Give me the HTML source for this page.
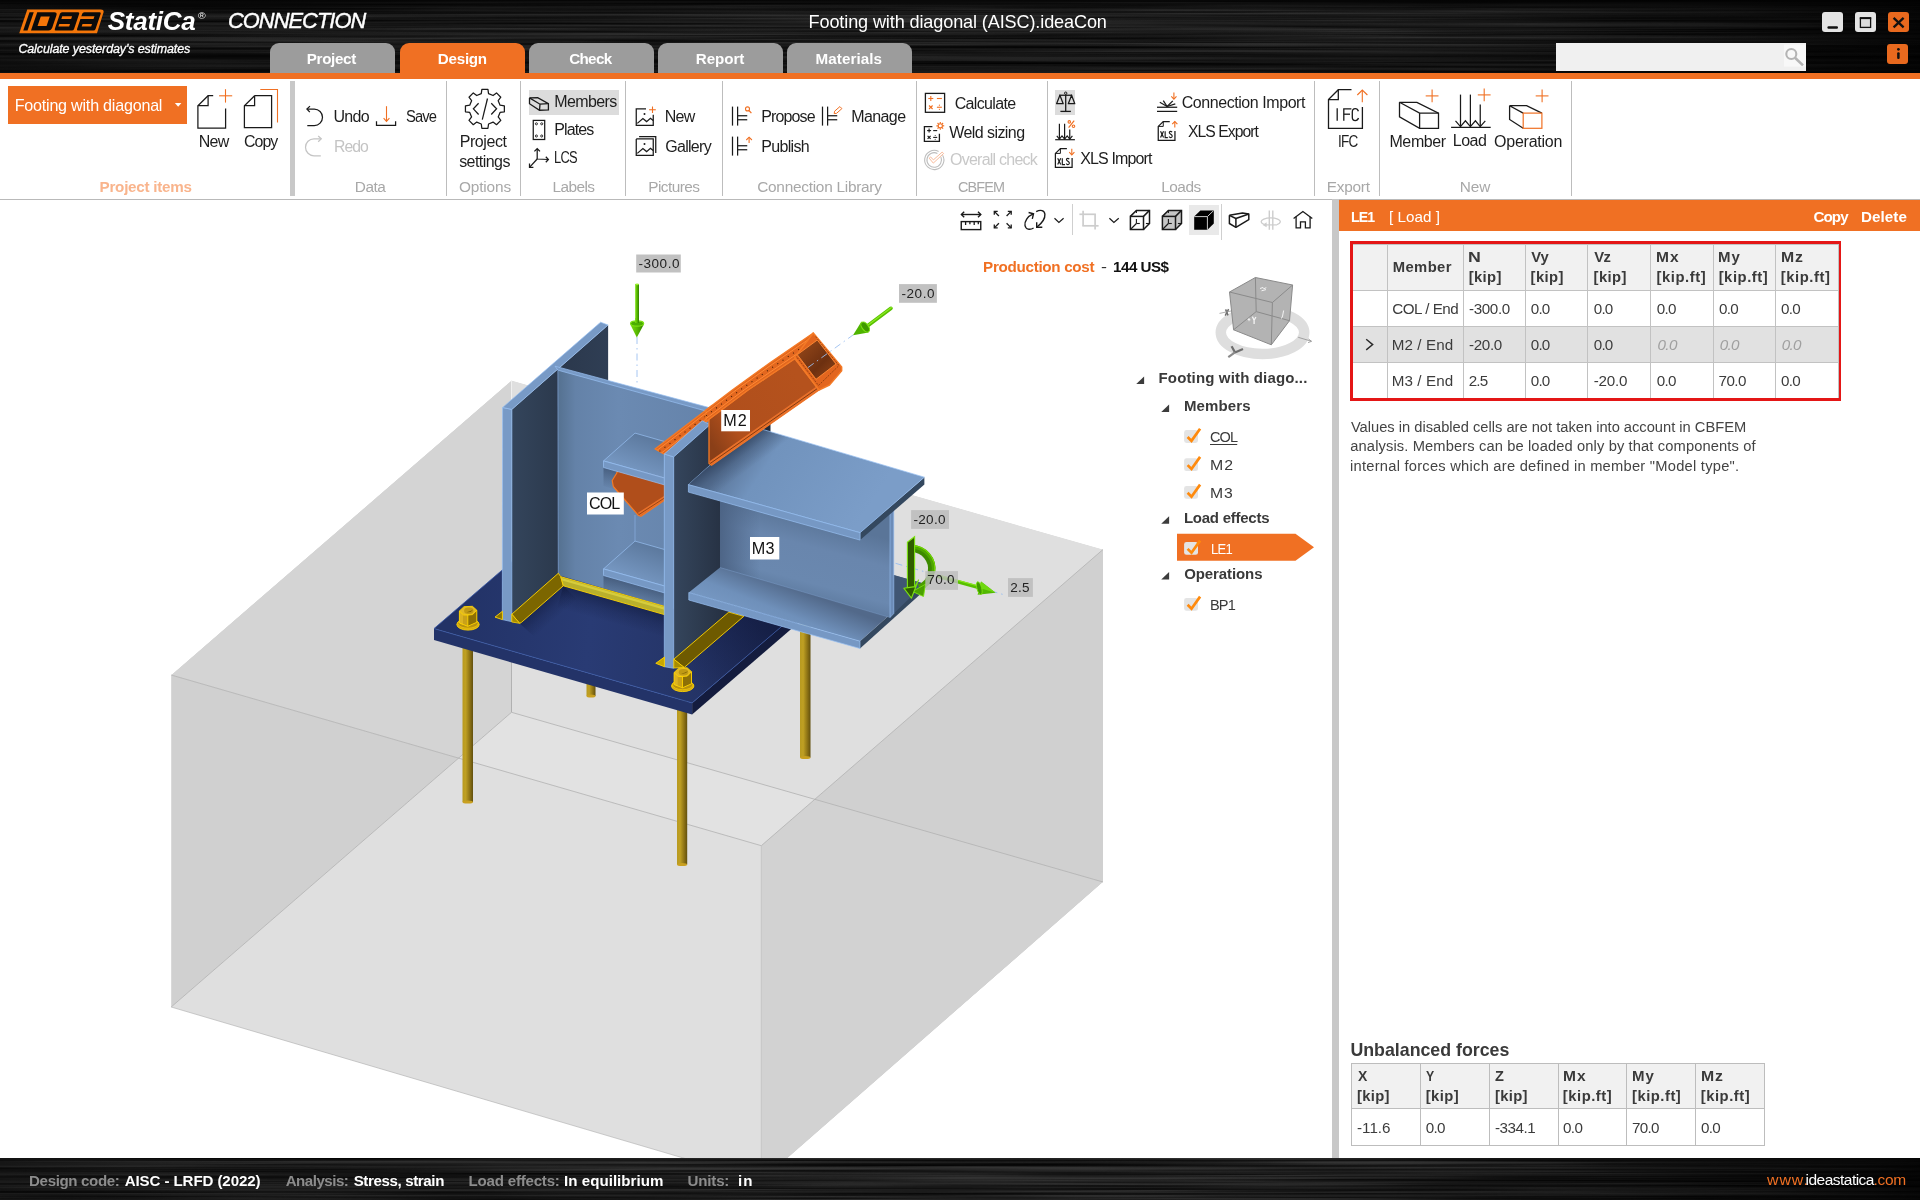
<!DOCTYPE html>
<html><head><meta charset="utf-8"><title>IDEA StatiCa Connection</title>
<style>
html,body{margin:0;padding:0;}
body{width:1920px;height:1200px;overflow:hidden;background:#fff;font-family:"Liberation Sans",sans-serif;position:relative;}
.t{position:absolute;white-space:pre;font-family:"Liberation Sans",sans-serif;}
.abs{position:absolute;}
svg{position:absolute;left:0;top:0;overflow:visible;}
</style></head><body>
<!-- header brushed texture -->
<svg width="1920" height="1200" viewBox="0 0 1920 1200">
<defs>
<filter id="brush" x="0" y="0" width="100%" height="100%" color-interpolation-filters="sRGB">
<feTurbulence type="fractalNoise" baseFrequency="0.0015 0.34" numOctaves="3" seed="7" result="n"/>
<feColorMatrix type="matrix" values="0 0 0 0 0  0 0 0 0 0  0 0 0 0 0  1.8 0 0 0 -0.65"/>
<feComposite operator="in" in2="SourceGraphic"/>
</filter>
<filter id="brush2" x="0" y="0" width="100%" height="100%" color-interpolation-filters="sRGB">
<feTurbulence type="fractalNoise" baseFrequency="0.0025 0.3" numOctaves="3" seed="23" result="n"/>
<feColorMatrix type="matrix" values="0 0 0 0 0  0 0 0 0 0  0 0 0 0 0  1.4 0 0 0 -0.5"/>
<feComposite operator="in" in2="SourceGraphic"/>
</filter>
<linearGradient id="hdrg" x1="0" x2="1" y1="0" y2="0">
<stop offset="0" stop-color="#242424"/><stop offset="0.3" stop-color="#313131"/><stop offset="0.72" stop-color="#333333"/><stop offset="0.88" stop-color="#1e1e1e"/><stop offset="1" stop-color="#0a0a0a"/>
</linearGradient>
<linearGradient id="hdrv" x1="0" x2="0" y1="0" y2="1"><stop offset="0" stop-color="#000" stop-opacity="0.8"/><stop offset="0.12" stop-color="#000" stop-opacity="0.15"/><stop offset="0.3" stop-color="#000" stop-opacity="0"/><stop offset="0.55" stop-color="#000" stop-opacity="0.05"/><stop offset="0.75" stop-color="#000" stop-opacity="0.3"/><stop offset="1" stop-color="#000" stop-opacity="0.4"/></linearGradient>
</defs>
<rect x="0" y="0" width="1920" height="74" fill="url(#hdrg)"/>
<rect x="0" y="0" width="1920" height="74" fill="#000" filter="url(#brush2)"/>
<rect x="0" y="0" width="1920" height="74" fill="#9a9a9a" filter="url(#brush)"/>
<rect x="0" y="0" width="1920" height="74" fill="url(#hdrv)"/>
<rect x="0" y="1158" width="1920" height="42" fill="url(#hdrg)"/>
<rect x="0" y="1158" width="1920" height="42" fill="#000" filter="url(#brush2)"/>
<rect x="0" y="1158" width="1920" height="42" fill="#9a9a9a" filter="url(#brush)"/>
</svg>
<!-- orange strip -->
<div class="abs" style="left:0;top:72.6px;width:1920px;height:6.8px;background:#f07023"></div>
<!-- tabs -->
<div class="abs" style="left:270px;top:43.2px;width:125px;height:29.6px;background:#9c9c9c;border-radius:9px 9px 0 0"></div>
<div class="abs" style="left:400px;top:43.2px;width:125px;height:30px;background:#f07023;border-radius:9px 9px 0 0"></div>
<div class="abs" style="left:529px;top:43.2px;width:125px;height:29.6px;background:#9c9c9c;border-radius:9px 9px 0 0"></div>
<div class="abs" style="left:658px;top:43.2px;width:125px;height:29.6px;background:#9c9c9c;border-radius:9px 9px 0 0"></div>
<div class="abs" style="left:787px;top:43.2px;width:125px;height:29.6px;background:#9c9c9c;border-radius:9px 9px 0 0"></div>
<!-- window buttons -->
<div class="abs" style="left:1822px;top:12px;width:21px;height:20px;background:#e4e4e4;border-radius:3px"></div>
<div class="abs" style="left:1855px;top:12px;width:21px;height:20px;background:#e4e4e4;border-radius:3px"></div>
<div class="abs" style="left:1888px;top:12px;width:21px;height:20px;background:#e8691e;border-radius:3px"></div>
<div class="abs" style="left:1887px;top:43.5px;width:21px;height:20px;background:#e8691e;border-radius:3px"></div>
<!-- search -->
<div class="abs" style="left:1556px;top:43px;width:250px;height:27.5px;background:#f0f0f0"></div>
<!-- ribbon -->
<div class="abs" style="left:0;top:79.4px;width:1920px;height:118px;background:#fff"></div>
<div class="abs" style="left:0;top:198.8px;width:1920px;height:1.3px;background:#b9b9b9"></div>
<div class="abs" style="left:8px;top:86px;width:179px;height:38px;background:#f07023"></div>
<div class="abs" style="left:289.5px;top:81px;width:5.5px;height:115px;background:#c8c8c8"></div>
<div class="abs" style="left:446px;top:81px;width:1px;height:115px;background:#bdbdbd"></div>
<div class="abs" style="left:520px;top:81px;width:1px;height:115px;background:#bdbdbd"></div>
<div class="abs" style="left:625px;top:81px;width:1px;height:115px;background:#bdbdbd"></div>
<div class="abs" style="left:721.5px;top:81px;width:1px;height:115px;background:#bdbdbd"></div>
<div class="abs" style="left:915.5px;top:81px;width:1px;height:115px;background:#bdbdbd"></div>
<div class="abs" style="left:1046.5px;top:81px;width:1px;height:115px;background:#bdbdbd"></div>
<div class="abs" style="left:1314px;top:81px;width:1px;height:115px;background:#bdbdbd"></div>
<div class="abs" style="left:1379px;top:81px;width:1px;height:115px;background:#bdbdbd"></div>
<div class="abs" style="left:1570.5px;top:81px;width:1px;height:115px;background:#bdbdbd"></div>
<div class="abs" style="left:529px;top:89.5px;width:90px;height:25.5px;background:#dcdcdc"></div>
<div class="abs" style="left:1055px;top:89.5px;width:20px;height:25.5px;background:#dcdcdc"></div>
<!-- splitter -->
<div class="abs" style="left:1332.4px;top:199.4px;width:6.5px;height:959px;background:#c8c8c8"></div>
<!-- toolbar selected -->
<div class="abs" style="left:1189px;top:205px;width:30px;height:30px;background:#e9e9e9"></div>
<div class="abs" style="left:1072px;top:204px;width:1px;height:31px;background:#cfcfcf"></div>
<div class="abs" style="left:1221px;top:204px;width:1px;height:36px;background:#cfcfcf"></div>
<!-- right panel header -->
<div class="abs" style="left:1339px;top:200px;width:581px;height:31px;background:#f07023"></div>
<!-- red table -->
<div class="abs" style="left:1349.9px;top:241.3px;width:491.3px;height:159.4px;background:#e41616"></div>
<div class="abs" style="left:1352.5px;top:244px;width:486px;height:154px;background:#c2c2c2"></div>
<!-- cells drawn by svg below -->
<svg width="1920" height="1200" viewBox="0 0 1920 1200" shape-rendering="crispEdges">
<g id="tbl1">
<!-- header -->
<rect x="1353" y="244.5" width="34" height="45" fill="#f1f1f1"/>
<rect x="1388" y="244.5" width="75" height="45" fill="#f1f1f1"/>
<rect x="1464" y="244.5" width="61" height="45" fill="#f1f1f1"/>
<rect x="1526" y="244.5" width="61" height="45" fill="#f1f1f1"/>
<rect x="1588" y="244.5" width="62" height="45" fill="#f1f1f1"/>
<rect x="1651" y="244.5" width="62" height="45" fill="#f1f1f1"/>
<rect x="1714" y="244.5" width="61" height="45" fill="#f1f1f1"/>
<rect x="1776" y="244.5" width="62" height="45" fill="#f1f1f1"/>
<!-- row1 -->
<rect x="1353" y="290.5" width="34" height="35" fill="#fff"/>
<rect x="1388" y="290.5" width="75" height="35" fill="#fff"/>
<rect x="1464" y="290.5" width="61" height="35" fill="#fff"/>
<rect x="1526" y="290.5" width="61" height="35" fill="#fff"/>
<rect x="1588" y="290.5" width="62" height="35" fill="#fff"/>
<rect x="1651" y="290.5" width="62" height="35" fill="#fff"/>
<rect x="1714" y="290.5" width="61" height="35" fill="#fff"/>
<rect x="1776" y="290.5" width="62" height="35" fill="#fff"/>
<!-- row2 -->
<rect x="1353" y="326.5" width="34" height="35" fill="#e1e1e1"/>
<rect x="1388" y="326.5" width="75" height="35" fill="#e1e1e1"/>
<rect x="1464" y="326.5" width="61" height="35" fill="#e1e1e1"/>
<rect x="1526" y="326.5" width="61" height="35" fill="#e1e1e1"/>
<rect x="1588" y="326.5" width="62" height="35" fill="#e1e1e1"/>
<rect x="1651" y="326.5" width="62" height="35" fill="#e1e1e1"/>
<rect x="1714" y="326.5" width="61" height="35" fill="#e1e1e1"/>
<rect x="1776" y="326.5" width="62" height="35" fill="#e1e1e1"/>
<!-- row3 -->
<rect x="1353" y="362.5" width="34" height="35" fill="#fff"/>
<rect x="1388" y="362.5" width="75" height="35" fill="#fff"/>
<rect x="1464" y="362.5" width="61" height="35" fill="#fff"/>
<rect x="1526" y="362.5" width="61" height="35" fill="#fff"/>
<rect x="1588" y="362.5" width="62" height="35" fill="#fff"/>
<rect x="1651" y="362.5" width="62" height="35" fill="#fff"/>
<rect x="1714" y="362.5" width="61" height="35" fill="#fff"/>
<rect x="1776" y="362.5" width="62" height="35" fill="#fff"/>
</g>
<g id="tbl2">
<rect x="1351" y="1063" width="414" height="83" fill="#bdbdbd"/>
<rect x="1352" y="1064" width="68" height="44" fill="#f1f1f1"/>
<rect x="1421" y="1064" width="68" height="44" fill="#f1f1f1"/>
<rect x="1490" y="1064" width="68" height="44" fill="#f1f1f1"/>
<rect x="1559" y="1064" width="67" height="44" fill="#f1f1f1"/>
<rect x="1627" y="1064" width="68" height="44" fill="#f1f1f1"/>
<rect x="1696" y="1064" width="68" height="44" fill="#f1f1f1"/>
<rect x="1352" y="1109" width="68" height="36" fill="#fff"/>
<rect x="1421" y="1109" width="68" height="36" fill="#fff"/>
<rect x="1490" y="1109" width="68" height="36" fill="#fff"/>
<rect x="1559" y="1109" width="67" height="36" fill="#fff"/>
<rect x="1627" y="1109" width="68" height="36" fill="#fff"/>
<rect x="1696" y="1109" width="68" height="36" fill="#fff"/>
</g>
</svg>
<!-- tree selection -->
<svg width="1920" height="1200" viewBox="0 0 1920 1200">
<polygon points="1177,533.7 1295.5,533.7 1314,547.2 1295.5,560.7 1177,560.7" fill="#f07023"/>
</svg>

<svg width="1920" height="1200" viewBox="0 0 1920 1200">
<defs>
<clipPath id="vp"><rect x="0" y="199" width="1332" height="959"/></clipPath>
<linearGradient id="gWeb" gradientUnits="userSpaceOnUse" x1="557" y1="0" x2="712" y2="0">
 <stop offset="0" stop-color="#54708f"/><stop offset="0.12" stop-color="#6482a8"/><stop offset="0.4" stop-color="#6b8ab2"/><stop offset="1" stop-color="#6583aa"/></linearGradient>
<linearGradient id="gLF" gradientUnits="userSpaceOnUse" x1="511" y1="0" x2="608" y2="0">
 <stop offset="0" stop-color="#34455c"/><stop offset="0.45" stop-color="#2c3a4e"/><stop offset="0.5" stop-color="#2b384c"/><stop offset="1" stop-color="#2f3e54"/></linearGradient>
<linearGradient id="gRF" gradientUnits="userSpaceOnUse" x1="673" y1="0" x2="760" y2="0">
 <stop offset="0" stop-color="#35465d"/><stop offset="0.55" stop-color="#273244"/><stop offset="1" stop-color="#222c3c"/></linearGradient>
<linearGradient id="gM3web" gradientUnits="userSpaceOnUse" x1="760" y1="505" x2="740" y2="580">
 <stop offset="0" stop-color="#5a7598"/><stop offset="0.35" stop-color="#6986ad"/><stop offset="0.8" stop-color="#6a88af"/><stop offset="1" stop-color="#5f7ca1"/></linearGradient>
<linearGradient id="gM3webL" gradientUnits="userSpaceOnUse" x1="720" y1="0" x2="760" y2="0">
 <stop offset="0" stop-color="#4a6182" stop-opacity="0.9"/><stop offset="1" stop-color="#4a6182" stop-opacity="0"/></linearGradient>
<linearGradient id="gM3top" gradientUnits="userSpaceOnUse" x1="740" y1="440" x2="860" y2="520">
 <stop offset="0" stop-color="#5a7599"/><stop offset="0.25" stop-color="#7193bd"/><stop offset="1" stop-color="#7b9dc8"/></linearGradient>
<linearGradient id="gM3bot" gradientUnits="userSpaceOnUse" x1="800" y1="590" x2="780" y2="640">
 <stop offset="0" stop-color="#52698a"/><stop offset="0.5" stop-color="#6f90ba"/><stop offset="1" stop-color="#7a9cc7"/></linearGradient>
<linearGradient id="gPlate" gradientUnits="userSpaceOnUse" x1="450" y1="620" x2="760" y2="650">
 <stop offset="0" stop-color="#223266"/><stop offset="0.45" stop-color="#293b74"/><stop offset="1" stop-color="#22305f"/></linearGradient>
<linearGradient id="gPlSh" gradientUnits="userSpaceOnUse" x1="700" y1="690" x2="775" y2="615"><stop offset="0" stop-color="#0a1030" stop-opacity="0"/><stop offset="0.5" stop-color="#0a1030" stop-opacity="0.3"/><stop offset="1" stop-color="#0a1030" stop-opacity="0.6"/></linearGradient>
<linearGradient id="gVL" gradientUnits="userSpaceOnUse" x1="0" y1="380" x2="0" y2="712"><stop offset="0" stop-color="#f0f0f0"/><stop offset="0.45" stop-color="#e4e4e4"/><stop offset="0.6" stop-color="#b8b8b8"/><stop offset="1" stop-color="#b0b0b0"/></linearGradient>
<linearGradient id="gShM2" gradientUnits="userSpaceOnUse" x1="738" y1="445" x2="753.6" y2="465.8"><stop offset="0" stop-color="#2c3d58" stop-opacity="0.75"/><stop offset="0.45" stop-color="#2c3d58" stop-opacity="0.3"/><stop offset="1" stop-color="#2c3d58" stop-opacity="0"/></linearGradient>
<linearGradient id="gShSt" gradientUnits="userSpaceOnUse" x1="634" y1="583" x2="629" y2="603"><stop offset="0" stop-color="#2e405c" stop-opacity="0.6"/><stop offset="0.6" stop-color="#2e405c" stop-opacity="0.25"/><stop offset="1" stop-color="#2e405c" stop-opacity="0"/></linearGradient>
<linearGradient id="gShSt1" gradientUnits="userSpaceOnUse" x1="634" y1="475" x2="629" y2="495"><stop offset="0" stop-color="#2e405c" stop-opacity="0.55"/><stop offset="0.6" stop-color="#2e405c" stop-opacity="0.2"/><stop offset="1" stop-color="#2e405c" stop-opacity="0"/></linearGradient>
<linearGradient id="gShW" gradientUnits="userSpaceOnUse" x1="614" y1="600" x2="608" y2="622"><stop offset="0" stop-color="#0c1434" stop-opacity="0.5"/><stop offset="0.5" stop-color="#0c1434" stop-opacity="0.2"/><stop offset="1" stop-color="#0c1434" stop-opacity="0"/></linearGradient>
<linearGradient id="gShLF" gradientUnits="userSpaceOnUse" x1="542" y1="604" x2="555" y2="619"><stop offset="0" stop-color="#0c1434" stop-opacity="0.45"/><stop offset="0.5" stop-color="#0c1434" stop-opacity="0.18"/><stop offset="1" stop-color="#0c1434" stop-opacity="0"/></linearGradient>
<linearGradient id="gRod" x1="0" x2="1" y1="0" y2="0">
 <stop offset="0" stop-color="#b89a20"/><stop offset="0.3" stop-color="#bfa023"/><stop offset="0.72" stop-color="#8a7014"/><stop offset="1" stop-color="#62500e"/></linearGradient>
<linearGradient id="gM2f" gradientUnits="userSpaceOnUse" x1="709" y1="440" x2="800" y2="380">
 <stop offset="0" stop-color="#8a3f18"/><stop offset="0.25" stop-color="#b04f1c"/><stop offset="1" stop-color="#b5521d"/></linearGradient>
<linearGradient id="gM2in" gradientUnits="userSpaceOnUse" x1="800" y1="350" x2="835" y2="385">
 <stop offset="0" stop-color="#8e4318"/><stop offset="0.5" stop-color="#6d3010"/><stop offset="1" stop-color="#9a4a1a"/></linearGradient>
<linearGradient id="gStf" gradientUnits="userSpaceOnUse" x1="640" y1="435" x2="625" y2="475">
 <stop offset="0" stop-color="#5d7a9f"/><stop offset="1" stop-color="#7a9cc7"/></linearGradient>
<linearGradient id="gStf2" gradientUnits="userSpaceOnUse" x1="640" y1="543" x2="625" y2="583">
 <stop offset="0" stop-color="#5d7a9f"/><stop offset="1" stop-color="#7a9cc7"/></linearGradient>
<linearGradient id="gArr" x1="0" x2="1" y1="0" y2="0">
 <stop offset="0" stop-color="#7be010"/><stop offset="0.5" stop-color="#58b800"/><stop offset="1" stop-color="#2f7d00"/></linearGradient>
</defs>
<g clip-path="url(#vp)">
<clipPath id="cT"><polygon points="171.2,675.0 511.5,380.5 1103.0,549.5 761.3,845.7"/></clipPath>
<clipPath id="cFL"><polygon points="171.2,675.0 761.3,845.7 761.3,1181.0 171.2,1007.0"/></clipPath>
<clipPath id="cFR"><polygon points="761.3,845.7 1103.0,549.5 1103.0,882.0 761.3,1181.0"/></clipPath>
<g clip-path="url(#cT)"><polygon points="171.2,675.0 511.5,380.5 1103.0,549.5 761.3,845.7" fill="rgb(222,222,222)"/><polygon points="171.2,675.0 511.5,380.5 511.5,712.3 171.2,1007.0" fill="rgb(212,212,212)"/><polygon points="511.5,380.5 1103.0,549.5 1103.0,882.0 511.5,712.3" fill="rgb(223,223,223)"/><polygon points="171.2,1007.0 511.5,712.3 1103.0,882.0 761.3,1181.0" fill="rgb(226,226,226)"/></g>
<g clip-path="url(#cFL)"><polygon points="171.2,675.0 761.3,845.7 761.3,1181.0 171.2,1007.0" fill="rgb(222,222,222)"/><polygon points="171.2,675.0 511.5,380.5 511.5,712.3 171.2,1007.0" fill="rgb(208,208,208)"/><polygon points="171.2,1007.0 511.5,712.3 1103.0,882.0 761.3,1181.0" fill="rgb(223,223,223)"/></g>
<g clip-path="url(#cFR)"><polygon points="761.3,845.7 1103.0,549.5 1103.0,882.0 761.3,1181.0" fill="rgb(210,210,210)"/><polygon points="171.2,1007.0 511.5,712.3 1103.0,882.0 761.3,1181.0" fill="rgb(210,210,210)"/><polygon points="511.5,380.5 1103.0,549.5 1103.0,882.0 511.5,712.3" fill="rgb(208,208,208)"/></g>
<polyline points="511.5,380.5 511.5,712.3" stroke="url(#gVL)" stroke-width="1" fill="none"/>
<polyline points="171.2,1007.0 511.5,712.3 1103.0,882.0" stroke="#b4b4b4" stroke-width="0.85" fill="none"/>
<polyline points="171.2,675.0 761.3,845.7 1103.0,549.5" stroke="#b4b4b4" stroke-width="0.85" fill="none"/>
<polyline points="761.3,845.7 761.3,1181.0" stroke="#c6c6c6" stroke-width="1" fill="none"/>
<polyline points="171.2,1007.0 761.3,1181.0" stroke="#bcbcbc" stroke-width="0.8" fill="none"/>
<rect x="586.5" y="680" width="9.0" height="16" fill="url(#gRod)"/>
<ellipse cx="591.0" cy="696" rx="4.5" ry="1.6" fill="#c9a020"/>
<rect x="800" y="600" width="10.5" height="157.5" fill="url(#gRod)"/>
<ellipse cx="805.25" cy="757.5" rx="5.25" ry="1.6" fill="#c9a020"/>
<rect x="462.5" y="640" width="10.5" height="162" fill="url(#gRod)"/>
<ellipse cx="467.75" cy="802" rx="5.25" ry="1.6" fill="#c9a020"/>
<rect x="677" y="700" width="10.200000000000045" height="164.5" fill="url(#gRod)"/>
<ellipse cx="682.1" cy="864.5" rx="5.100000000000023" ry="1.6" fill="#c9a020"/>
<polygon points="434.0,628.6 692.1,702.9 692.1,714.6 434.0,640.1" fill="#233368"/>
<polygon points="692.1,702.9 812.1,600.5 812.1,611.0 692.1,714.6" fill="#141c3e"/>
<polygon points="434.0,628.6 692.1,702.9 812.1,600.5 556.0,523.8" fill="url(#gPlate)"/>
<polygon points="684.2,667.5 743.8,616.3 800.0,612.0 693.1,701.9" fill="url(#gPlSh)"/>
<polygon points="563.3,585.8 664.4,614.6 664.4,640.0 557.0,609.0" fill="url(#gShW)"/>
<polygon points="519.6,623.3 563.3,585.8 580.0,602.0 538.0,640.0" fill="url(#gShLF)"/>
<polyline points="556.0,523.8 434.0,628.6 692.1,702.9 812.1,600.5" stroke="#3a5aa8" stroke-width="0.8" fill="none"/>
<ellipse cx="468" cy="624.5" rx="11.2" ry="5.6" fill="#d2a916" stroke="#ffd400" stroke-width="0.9"/>
<ellipse cx="468" cy="623.3" rx="10.2" ry="4.9" fill="#b8920f" stroke="#ffd400" stroke-width="0.6"/>
<polygon points="459.4,611.0 459.4,623.0 467.8,626.3 476.8,622.3 476.8,610.2" fill="#c9a118"/>
<polygon points="467.8,615.0 467.8,626.3 476.8,622.3 476.8,610.2" fill="#8d7006"/>
<polygon points="459.4,611.0 459.4,623.0 463.0,625.1 463.0,613.8" fill="#dcb321"/>
<polyline points="459.4,611.0 459.4,623.0 467.8,626.3 476.8,622.3 476.8,610.2" fill="none" stroke="#ffd400" stroke-width="0.9"/>
<line x1="467.8" y1="615.0" x2="467.8" y2="626.3" stroke="#ffd400" stroke-width="0.9"/>
<polygon points="459.4,611.0 464.0,606.7 472.4,606.3 476.8,610.2 472.6,614.6 467.8,615.0 463.6,615.0" fill="#e0b824" stroke="#ffd400" stroke-width="0.9" stroke-linejoin="round"/>
<ellipse cx="468.8" cy="610.7" rx="4.7" ry="3.2" fill="#c09a14"/>
<path d="M466.5,612.2 Q471,613.0 473.3,609.4 Q471,611.2 466.5,612.2Z" fill="#7a5f04"/>
<polygon points="511.9,409.4 608.1,325.0 608.1,525.4 511.8,621.0" fill="url(#gLF)"/>
<polygon points="502.6,407.5 511.9,409.4 511.8,621.7 502.3,619.6" fill="#789ac6" stroke="#98c0f2" stroke-width="0.7"/>
<polygon points="502.6,407.5 600.6,322.2 608.1,325.0 511.9,409.4" fill="#789ac6" stroke="#98c0f2" stroke-width="0.7"/>
<polygon points="557.9,369.5 712.0,411.5 712.0,620.0 558.3,575.0" fill="url(#gWeb)"/>
<polygon points="555.0,366.2 710.0,407.8 708.0,411.6 558.0,370.2" fill="#789ac6" stroke="#98c0f2" stroke-width="0.7"/>
<line x1="557.9" y1="370" x2="558.3" y2="574" stroke="#7a9ccc" stroke-width="0.8"/>
<line x1="635" y1="515" x2="635" y2="541" stroke="#86aadb" stroke-width="0.8"/>
<polygon points="603.5,574.0 664.8,592.5 664.8,612.0 603.5,594.0" fill="url(#gShSt)"/>
<polygon points="603.5,466.0 664.8,484.5 664.8,504.0 603.5,486.0" fill="url(#gShSt1)"/>
<polygon points="558.3,573.3 511.8,614.2 519.6,623.3 521.3,622.5 563.3,585.8 560.8,576.7" fill="#7c6600" stroke="#ffd400" stroke-width="0.9" stroke-linejoin="round"/>
<polygon points="511.8,614.2 511.8,622.0 519.6,623.3" fill="#a88c00" stroke="#ffd400" stroke-width="0.8" stroke-linejoin="round"/>
<polygon points="495.0,617.1 502.4,611.3 502.4,619.6" fill="#8a7200" stroke="#ffd400" stroke-width="0.9" stroke-linejoin="round"/>
<polygon points="560.8,576.7 664.4,606.3 664.4,614.6 563.3,585.8" fill="#b9b02c" stroke="#ffd400" stroke-width="0.9" stroke-linejoin="round"/>
<polygon points="561.5,578.0 664.4,607.2 664.4,609.8 562.2,580.5" fill="#d6cc3c"/>
<polygon points="618.0,470.0 664.8,470.0 664.8,500.0 641.0,516.3 638.3,515.4 613.3,486.5 612.2,480.5 616.5,473.5" fill="#b04e1b" stroke="#f47a26" stroke-width="1.2" stroke-linejoin="round"/>
<polygon points="640.0,516.2 664.8,500.0 664.8,495.5 638.0,512.8" fill="#e8702a"/>
<polyline points="639.0,514.5 664.8,497.8" stroke="#7a3208" stroke-width="0.7" fill="none"/>
<polygon points="635.0,433.1 603.5,460.9 664.8,478.1 664.8,441.6" fill="url(#gStf)" stroke="#98c0f2" stroke-width="0.7"/>
<polygon points="603.5,460.9 664.8,478.1 664.8,485.0 603.5,467.5" fill="#7698c4" stroke="#98c0f2" stroke-width="0.7"/>
<polygon points="635.0,541.1 603.5,568.9 664.8,586.1 664.8,549.6" fill="url(#gStf2)" stroke="#98c0f2" stroke-width="0.7"/>
<polygon points="603.5,568.9 664.8,586.1 664.8,593.0 603.5,575.5" fill="#7698c4" stroke="#98c0f2" stroke-width="0.7"/>
<polygon points="655.0,448.9 712.0,405.5 712.0,417.5 664.0,454.0" fill="#e2671f" stroke="#f47a26" stroke-width="1.3" stroke-linejoin="round"/>
<polyline points="657.2,450.2 712.0,408.5" stroke="#ff8a34" stroke-width="1" fill="none"/>
<polyline points="661.8,452.7 712.0,414.5" stroke="#ff8a34" stroke-width="1" fill="none"/>
<polyline points="659.5,451.4 712.0,411.5" stroke="#4a2006" stroke-width="1.1" stroke-dasharray="1.1 5.2" fill="none"/>
<polygon points="673.7,456.9 770.5,372.0 770.5,583.0 673.7,668.0" fill="url(#gRF)"/>
<polygon points="664.3,454.0 673.7,456.9 673.7,668.3 664.3,666.7" fill="#789ac6" stroke="#98c0f2" stroke-width="0.7"/>
<polygon points="664.3,454.0 702.2,420.8 710.0,424.6 673.7,456.9" fill="#789ac6" stroke="#98c0f2" stroke-width="0.7"/>
<polygon points="728.8,612.1 673.8,659.2 684.2,667.5 743.8,616.3" fill="#6e5a00" stroke="#ffd400" stroke-width="0.9" stroke-linejoin="round"/>
<polygon points="673.8,659.2 673.8,668.0 684.2,667.5" fill="#a88c00" stroke="#ffd400" stroke-width="0.8" stroke-linejoin="round"/>
<polygon points="655.8,663.3 664.4,657.1 664.4,666.7" fill="#c9a800" stroke="#ffd400" stroke-width="0.9" stroke-linejoin="round"/>
<polygon points="860.0,641.2 924.5,583.8 924.5,590.5 860.0,648.5" fill="#34485f"/>
<polygon points="720.0,567.5 753.0,536.0 924.5,583.8 860.0,641.2 688.8,592.5" fill="url(#gM3bot)"/>
<polygon points="893.8,575.0 924.5,583.8 893.8,613.5" fill="#405674"/>
<polygon points="688.8,592.5 860.0,641.2 860.0,648.5 688.8,600.0" fill="#7698c4" stroke="#98c0f2" stroke-width="0.7"/>
<polygon points="720.0,462.0 890.5,513.0 890.5,617.5 720.0,567.5" fill="url(#gM3web)"/>
<polygon points="720.0,490.0 760.0,502.0 760.0,579.5 720.0,567.5" fill="url(#gM3webL)"/>
<polygon points="890.0,500.0 893.8,501.0 893.8,613.5 890.0,617.5" fill="#6c8cb8" stroke="#98c0f2" stroke-width="0.6"/>
<line x1="720" y1="567.5" x2="890" y2="617.5" stroke="#86aadb" stroke-width="0.6" stroke-opacity="0.6"/>
<polygon points="860.1,532.7 924.4,477.2 924.4,484.6 860.1,540.1" fill="#34485f"/>
<polygon points="688.4,484.6 753.0,426.5 924.4,477.2 860.1,532.7" fill="url(#gM3top)" stroke="#98c0f2" stroke-width="0.7"/>
<polygon points="688.4,484.6 753.0,427.0 790.0,438.0 735.0,500.0" fill="url(#gShM2)"/>
<polygon points="688.4,484.6 860.1,532.7 860.1,540.1 688.4,492.1" fill="#7698c4" stroke="#98c0f2" stroke-width="0.7"/>
<polygon points="709.0,419.3 748.0,390.0 770.0,375.3 794.7,358.7 819.0,390.0 764.5,428.0 711.5,465.2 709.0,463.5" fill="url(#gM2f)" stroke="#f47a26" stroke-width="1.3" stroke-linejoin="round"/>
<polygon points="711.5,465.4 764.5,428.2 819.0,390.2 816.8,386.2 762.4,424.2 709.6,461.2" fill="#e8702a"/>
<polyline points="710.5,463.3 763.4,426.2 817.9,388.2" stroke="#6a2c08" stroke-width="0.8" fill="none"/>
<polygon points="706.0,410.0 732.3,390.0 770.0,362.7 813.3,333.0 794.7,358.7 770.0,375.3 748.0,390.0 706.0,421.5" fill="#e2671f" stroke="#f47a26" stroke-width="1.3" stroke-linejoin="round"/>
<polyline points="706.0,412.9 736.2,390.0 770.0,365.8 808.6,339.4" stroke="#ff8a34" stroke-width="1" fill="none"/>
<polyline points="706.0,418.6 744.1,390.0 770.0,372.2 799.4,352.3" stroke="#ff8a34" stroke-width="1" fill="none"/>
<polyline points="706.0,415.8 740.1,390.0 770.0,369.0 804.0,345.9" stroke="#4a2006" stroke-width="1.1" stroke-dasharray="1.1 5.2" fill="none"/>
<polygon points="813.3,333.0 841.7,367.0 841.7,370.7 829.5,385.0 819.0,390.0 794.7,357.5" fill="#e3661f" stroke="#f47a26" stroke-width="1.4" stroke-linejoin="round"/>
<polygon points="817.3,340.0 836.0,364.0 816.0,379.3 797.3,354.7" fill="url(#gM2in)" stroke="#ff8a34" stroke-width="0.9"/>
<polyline points="815.5,336.5 839.0,365.5 818.5,385.5 796.0,356.0" stroke="#7a3208" stroke-width="0.7" stroke-dasharray="2 1.2" fill="none"/>
<line x1="808" y1="367.5" x2="853" y2="335" stroke="#9cc0f0" stroke-width="0.9" stroke-dasharray="7 4 1.5 4"/>
<ellipse cx="682.7" cy="686" rx="11.2" ry="5.6" fill="#d2a916" stroke="#ffd400" stroke-width="0.9"/>
<ellipse cx="682.7" cy="684.8" rx="10.2" ry="4.9" fill="#b8920f" stroke="#ffd400" stroke-width="0.6"/>
<polygon points="674.1,672.5 674.1,684.5 682.5,687.8 691.5,683.8 691.5,671.7" fill="#c9a118"/>
<polygon points="682.5,676.5 682.5,687.8 691.5,683.8 691.5,671.7" fill="#8d7006"/>
<polygon points="674.1,672.5 674.1,684.5 677.7,686.6 677.7,675.3" fill="#dcb321"/>
<polyline points="674.1,672.5 674.1,684.5 682.5,687.8 691.5,683.8 691.5,671.7" fill="none" stroke="#ffd400" stroke-width="0.9"/>
<line x1="682.5" y1="676.5" x2="682.5" y2="687.8" stroke="#ffd400" stroke-width="0.9"/>
<polygon points="674.1,672.5 678.7,668.2 687.1,667.8 691.5,671.7 687.3,676.1 682.5,676.5 678.3,676.5" fill="#e0b824" stroke="#ffd400" stroke-width="0.9" stroke-linejoin="round"/>
<ellipse cx="683.5" cy="672.2" rx="4.7" ry="3.2" fill="#c09a14"/>
<path d="M681.2,673.7 Q685.7,674.5 688.0,670.9 Q685.7,672.7 681.2,673.7Z" fill="#7a5f04"/>
<line x1="637" y1="337" x2="637" y2="386" stroke="#9cc0f0" stroke-width="0.9" stroke-dasharray="7 4 1.5 4"/>
<rect x="635.2" y="284" width="3.8" height="40" fill="url(#gArr)"/>
<ellipse cx="637.1" cy="284.3" rx="1.9" ry="0.9" fill="#9cf030"/>
<polygon points="630.3,324.5 643.8,324.5 636.8,337.5" fill="url(#gArr)"/>
<ellipse cx="637.1" cy="323.5" rx="6.6" ry="2.6" fill="#4cae00" stroke="#7be010" stroke-width="1.1"/>
<rect x="635.2" y="318" width="3.8" height="5" fill="url(#gArr)"/>
<line x1="891" y1="308.3" x2="867" y2="326.3" stroke="#58c000" stroke-width="3.6" stroke-linecap="round"/>
<line x1="891.4" y1="307.6" x2="867.4" y2="325.6" stroke="#8cea20" stroke-width="1.2" stroke-linecap="round"/>
<polygon points="861.5,321.5 868.5,332.5 853,335.2" fill="#4fb400"/>
<ellipse cx="865.2" cy="327" rx="3.2" ry="5.8" transform="rotate(-37 865.2 327)" fill="#3f9a00" stroke="#7be010" stroke-width="1.1"/>
<line x1="895.5" y1="563.3" x2="1002.8" y2="594.4" stroke="#8ab8f4" stroke-width="0.8" stroke-dasharray="7 4 1.5 4"/>
<path d="M911.5,548.6 A20.2,20.2 0 0 1 931.4,572.5" fill="none" stroke="#3d8a00" stroke-width="7.4"/>
<path d="M911.5,545.8 A23,23 0 0 1 934.4,572.3" fill="none" stroke="#6fd400" stroke-width="1.5"/>
<path d="M911.5,547.6 A21.2,21.2 0 0 1 932.6,572.4" fill="none" stroke="#4fa600" stroke-width="2.2"/>
<path d="M931.4,572.5 A20.2,20.2 0 0 1 919,587.6" fill="none" stroke="#4a9c00" stroke-width="6.5"/>
<polygon points="925.5,584.2 923.5,596.5 912.5,591.5" fill="#4aa000" stroke="#7be010" stroke-width="0.9"/>
<polygon points="907.4,542.2 914.6,536.7 914.6,589.5 907.4,589.5" fill="#2f5c00" stroke="#7be010" stroke-width="1.1"/>
<polygon points="903.8,588.2 908,587.6 915,586.6 918.5,580 911.4,598.2" fill="#2f5c00" stroke="#7be010" stroke-width="1.1" stroke-linejoin="round"/>
<line x1="937" y1="575.9" x2="979" y2="587.4" stroke="#58c000" stroke-width="3.6"/>
<line x1="937.3" y1="574.7" x2="979.3" y2="586.2" stroke="#8cea20" stroke-width="1.1"/>
<polygon points="981,581.6 995.6,592.7 977.6,594.8" fill="#52b800"/>
<polygon points="981,581.6 995.6,592.7 979.5,588" fill="#6fd810"/>
<ellipse cx="979.3" cy="588.2" rx="2.4" ry="6.6" transform="rotate(-15 979.3 588.2)" fill="#3f9a00" stroke="#7be010" stroke-width="0.9"/>
<rect x="636.2" y="254.5" width="44.59999999999991" height="18.0" fill="#c1c1c1"/>
<rect x="899" y="284.1" width="37.89999999999998" height="18.69999999999999" fill="#c1c1c1"/>
<rect x="911.1" y="510.1" width="37.89999999999998" height="18.799999999999955" fill="#c1c1c1"/>
<rect x="925.3" y="571.1" width="32.7" height="18.8" fill="#bdbdbd" fill-opacity="0.82"/>
<rect x="1008" y="578.1" width="24.90000000000009" height="18.799999999999955" fill="#c1c1c1"/>
<rect x="721.2" y="410" width="28.799999999999955" height="21.30000000000001" fill="#fff"/>
<rect x="587" y="492.5" width="36.799999999999955" height="22.0" fill="#fff"/>
<rect x="750" y="537" width="29.299999999999955" height="22.5" fill="#fff"/>
</g>
</svg>
<svg width="1920" height="1200" viewBox="0 0 1920 1200" fill="none" stroke-linecap="butt" stroke-linejoin="miter">
<path d="M27.25,9.6 L100.5,9.6 Q104.4,9.6 103.5,12.6 L97,33.25 L19.25,33.25 Z" fill="#f47609"/>
<g fill="#0b0b0b">
<polygon points="29.49,12.25 33.74,12.25 27.50,30.50 23.25,30.50"/>
<path d="M37.24,12.25 L54.24,12.25 Q57.49,12.25 56.38,15.5 L52.28,27.5 Q51.25,30.5 48.50,30.5 L31.00,30.5 Z"/>
<path d="M62.09,12.25 L78.14,12.25 Q79.74,12.25 79.19,13.85 L74.05,28.9 Q73.50,30.5 71.90,30.5 L55.85,30.5 Q54.25,30.5 54.80,28.9 L59.94,13.85 Q60.49,12.25 62.09,12.25 Z"/>
<path d="M84.34,12.25 L99.64,12.25 Q101.24,12.25 100.69,13.85 L95.55,28.9 Q95.00,30.5 93.40,30.5 L78.10,30.5 Q76.50,30.5 77.05,28.9 L82.19,13.85 Q82.74,12.25 84.34,12.25 Z"/>
</g>
<g fill="#f47609">
<polygon points="40.79,16.50 49.79,16.50 46.54,26.00 37.54,26.00"/>
<polygon points="62.27,16.25 72.07,16.25 71.13,19.00 61.33,19.00"/>
<polygon points="59.22,24.00 70.02,24.00 69.17,26.50 58.37,26.50"/>
<polygon points="80.47,16.25 94.47,16.25 93.53,19.00 79.53,19.00"/>
<polygon points="82.52,24.00 92.02,24.00 91.17,26.50 81.67,26.50"/>
</g>
<rect x="1827.4" y="26.2" width="10.6" height="2.5" rx="1.2" fill="#111"/>
<rect x="1860.4" y="18.2" width="10.2" height="9.2" fill="#dcdcdc" stroke="#111" stroke-width="1.3"/>
<rect x="1859.8" y="17.1" width="11.4" height="2" fill="#111"/>
<line x1="1893.6" y1="17.9" x2="1903.6" y2="27.3" stroke="#111" stroke-width="2.3" />
<line x1="1903.6" y1="17.9" x2="1893.6" y2="27.3" stroke="#111" stroke-width="2.3" />
<circle cx="1898.4" cy="49.3" r="1.35" fill="#111"/>
<rect x="1897.15" y="52.2" width="2.5" height="6.8" rx="1.1" fill="#111"/>
<rect x="1784" y="44.6" width="22" height="22" fill="#f8f8f8"/>
<circle cx="1791.3" cy="54" r="5" stroke="#b4b4b4" stroke-width="2.1"/>
<line x1="1795" y1="57.8" x2="1803" y2="65.4" stroke="#b4b4b4" stroke-width="2.6" />
<polygon points="174.90,103.10 181.40,103.10 178.15,106.80" fill="#fff"/>
<polyline points="213.20,95.70 208.10,95.70 197.90,105.70 197.90,128.10 225.60,128.10 225.60,108.40" fill="none" stroke="#1a1a1a" stroke-width="1.25" />
<polyline points="208.10,95.70 208.10,105.70 197.90,105.70" fill="none" stroke="#1a1a1a" stroke-width="1.25" />
<line x1="219.1" y1="95.8" x2="232.2" y2="95.8" stroke="#f07023" stroke-width="1.1" />
<line x1="225.5" y1="89.2" x2="225.5" y2="102.6" stroke="#f07023" stroke-width="1.1" />
<polyline points="254.60,95.70 271.60,95.70 271.60,127.60 244.40,127.60 244.40,105.70 254.60,95.70" fill="none" stroke="#1a1a1a" stroke-width="1.25" />
<polyline points="254.60,95.70 254.60,105.70 244.40,105.70" fill="none" stroke="#1a1a1a" stroke-width="1.25" />
<polyline points="260.30,89.50 277.50,89.50 277.50,122.60" fill="none" stroke="#f07023" stroke-width="1.1" />
<path d="M307.3,109.1 H314.3 A8.2,8.2 0 0 1 314.3,125.5 H307.3" stroke="#1a1a1a" stroke-width="1.25"/>
<polyline points="310.00,106.10 306.90,109.00 309.80,112.10" fill="none" stroke="#1a1a1a" stroke-width="1.25" />
<path d="M320.9,138.8 H314 A8.5,8.5 0 0 0 314,155.8 H320.8" stroke="#c4c4c4" stroke-width="1.25"/>
<polyline points="318.20,136.00 321.30,138.80 318.20,141.80" fill="none" stroke="#c4c4c4" stroke-width="1.25" />
<line x1="386.5" y1="106.2" x2="386.5" y2="121.2" stroke="#f07023" stroke-width="1.1" />
<polyline points="383.60,118.20 386.50,121.40 389.40,118.20" fill="none" stroke="#f07023" stroke-width="1.1" />
<polyline points="376.50,121.20 376.50,125.30 395.60,125.30 395.60,121.20" fill="none" stroke="#1a1a1a" stroke-width="1.25" />
<polygon points="481.27,93.63 481.86,89.34 487.94,89.34 488.53,93.63 493.06,95.50 496.51,92.89 500.81,97.19 498.20,100.64 500.07,105.17 504.36,105.76 504.36,111.84 500.07,112.43 498.20,116.96 500.81,120.41 496.51,124.71 493.06,122.10 488.53,123.97 487.94,128.26 481.86,128.26 481.27,123.97 476.74,122.10 473.29,124.71 468.99,120.41 471.60,116.96 469.73,112.43 465.44,111.84 465.44,105.76 469.73,105.17 471.60,100.64 468.99,97.19 473.29,92.89 476.74,95.50" stroke="#1a1a1a" stroke-width="1.25" stroke-linejoin="round"/>
<polyline points="478.60,103.20 473.40,108.80 478.60,114.50" fill="none" stroke="#1a1a1a" stroke-width="1.25" />
<line x1="487.5" y1="98.5" x2="482.3" y2="119.6" stroke="#1a1a1a" stroke-width="1.25" />
<polyline points="491.25,103.20 496.60,108.80 491.25,114.50" fill="none" stroke="#1a1a1a" stroke-width="1.25" />
<polyline points="529.50,97.90 537.70,97.60 548.40,103.70 548.40,109.80 539.50,110.25 529.50,103.70 529.50,97.90" fill="none" stroke="#1a1a1a" stroke-width="1.3" />
<polyline points="529.50,97.90 540.00,104.20 548.40,103.70" fill="none" stroke="#1a1a1a" stroke-width="1.3" />
<line x1="540" y1="104.2" x2="539.5" y2="110.25" stroke="#1a1a1a" stroke-width="1.3" />
<rect x="533.25" y="120.4" width="11.45" height="19.1" stroke="#1a1a1a" stroke-width="1.25"/>
<circle cx="536.4" cy="123.8" r="1.05" stroke="#1a1a1a" stroke-width="0.9"/>
<circle cx="541.7" cy="123.8" r="1.05" stroke="#1a1a1a" stroke-width="0.9"/>
<circle cx="536.4" cy="136" r="1.05" stroke="#1a1a1a" stroke-width="0.9"/>
<circle cx="541.7" cy="136" r="1.05" stroke="#1a1a1a" stroke-width="0.9"/>
<polyline points="537.20,148.90 537.20,159.00 548.20,159.50" fill="none" stroke="#1a1a1a" stroke-width="1.25" />
<line x1="537.2" y1="159" x2="529.7" y2="167.1" stroke="#1a1a1a" stroke-width="1.25" />
<polyline points="534.40,151.40 537.20,148.70 540.00,151.40" fill="none" stroke="#1a1a1a" stroke-width="1.25" />
<polyline points="545.80,156.70 548.40,159.50 545.80,162.30" fill="none" stroke="#1a1a1a" stroke-width="1.25" />
<polyline points="529.50,163.60 529.50,167.25 533.40,167.25" fill="none" stroke="#1a1a1a" stroke-width="1.25" />
<polyline points="646.00,108.90 636.25,108.90 636.25,125.40 653.25,125.40 653.25,114.75" fill="none" stroke="#1a1a1a" stroke-width="1.25" />
<polyline points="637.30,123.40 642.90,118.50 646.60,121.60 650.40,118.25 653.25,120.60" fill="none" stroke="#1a1a1a" stroke-width="1.25" />
<circle cx="644.5" cy="114.1" r="1" fill="#1a1a1a"/>
<line x1="649.1" y1="109.75" x2="655.8" y2="109.75" stroke="#f07023" stroke-width="1.1" />
<line x1="652.5" y1="106.5" x2="652.5" y2="113" stroke="#f07023" stroke-width="1.1" />
<polyline points="636.25,138.90 653.25,138.90 653.25,155.40 636.25,155.40 636.25,138.90" fill="none" stroke="#1a1a1a" stroke-width="1.25" />
<polyline points="637.30,153.40 642.90,148.50 646.60,151.60 650.40,148.25 653.25,150.60" fill="none" stroke="#1a1a1a" stroke-width="1.25" />
<circle cx="644.5" cy="144.1" r="1" fill="#1a1a1a"/>
<polyline points="639.10,136.60 655.75,136.60 655.75,152.90" fill="none" stroke="#1a1a1a" stroke-width="1.25" />
<line x1="732.5" y1="106.6" x2="732.5" y2="125.6" stroke="#1a1a1a" stroke-width="1.25" />
<line x1="737.6" y1="106.6" x2="737.6" y2="125.6" stroke="#1a1a1a" stroke-width="1.25" />
<line x1="737.6" y1="115.75" x2="747.25" y2="115.75" stroke="#1a1a1a" stroke-width="1.25" />
<line x1="737.6" y1="119.75" x2="747.25" y2="119.75" stroke="#1a1a1a" stroke-width="1.25" />
<line x1="822.5" y1="106.6" x2="822.5" y2="125.6" stroke="#1a1a1a" stroke-width="1.25" />
<line x1="827.6" y1="106.6" x2="827.6" y2="125.6" stroke="#1a1a1a" stroke-width="1.25" />
<line x1="827.6" y1="115.75" x2="837.25" y2="115.75" stroke="#1a1a1a" stroke-width="1.25" />
<line x1="827.6" y1="119.75" x2="837.25" y2="119.75" stroke="#1a1a1a" stroke-width="1.25" />
<line x1="732.5" y1="136.6" x2="732.5" y2="155.6" stroke="#1a1a1a" stroke-width="1.25" />
<line x1="737.6" y1="136.6" x2="737.6" y2="155.6" stroke="#1a1a1a" stroke-width="1.25" />
<line x1="737.6" y1="145.75" x2="747.25" y2="145.75" stroke="#1a1a1a" stroke-width="1.25" />
<line x1="737.6" y1="149.75" x2="747.25" y2="149.75" stroke="#1a1a1a" stroke-width="1.25" />
<circle cx="747.5" cy="108.9" r="2" stroke="#f07023" stroke-width="1.1"/>
<line x1="749" y1="110.5" x2="751.4" y2="113.2" stroke="#f07023" stroke-width="1.2" />
<polygon points="834.60,111.20 839.90,106.60 841.90,108.60 836.60,113.30 834.20,113.60" stroke="#f07023" stroke-width="1"/>
<line x1="749.1" y1="137.3" x2="749.1" y2="143" stroke="#f07023" stroke-width="1.1" />
<polyline points="746.30,140.00 749.10,137.20 751.90,140.00" fill="none" stroke="#f07023" stroke-width="1.1" />
<rect x="925.4" y="93.4" width="19.2" height="18.9" stroke="#1a1a1a" stroke-width="1.3"/>
<line x1="928.3" y1="98.5" x2="933.3" y2="98.5" stroke="#f07023" stroke-width="1.1" />
<line x1="930.8" y1="96.0" x2="930.8" y2="101.0" stroke="#f07023" stroke-width="1.1" />
<line x1="936.9" y1="98.5" x2="941.9" y2="98.5" stroke="#f07023" stroke-width="1.1" />
<line x1="929" y1="105.5" x2="932.6" y2="109" stroke="#f07023" stroke-width="1.1" />
<line x1="932.6" y1="105.5" x2="929" y2="109" stroke="#f07023" stroke-width="1.1" />
<line x1="936.9" y1="107.25" x2="941.9" y2="107.25" stroke="#f07023" stroke-width="1.1" />
<circle cx="939.4" cy="105.2" r="0.6" fill="#f07023"/><circle cx="939.4" cy="109.3" r="0.6" fill="#f07023"/>
<polyline points="932.40,126.65 924.40,126.65 924.40,141.40 939.40,141.40 939.40,133.70" fill="none" stroke="#1a1a1a" stroke-width="1.3" />
<line x1="927.1" y1="130.6" x2="931.1" y2="130.6" stroke="#1a1a1a" stroke-width="1.1" />
<line x1="929.1" y1="128.6" x2="929.1" y2="132.6" stroke="#1a1a1a" stroke-width="1.1" />
<line x1="933.2" y1="130.6" x2="937.2" y2="130.6" stroke="#1a1a1a" stroke-width="1.1" />
<line x1="927.6" y1="135.9" x2="930.6" y2="138.9" stroke="#1a1a1a" stroke-width="1.1" />
<line x1="930.6" y1="135.9" x2="927.6" y2="138.9" stroke="#1a1a1a" stroke-width="1.1" />
<line x1="933.2" y1="137.4" x2="937.2" y2="137.4" stroke="#1a1a1a" stroke-width="1.1" />
<circle cx="935.2" cy="135.6" r="0.5" fill="#1a1a1a"/><circle cx="935.2" cy="139.2" r="0.5" fill="#1a1a1a"/>
<circle cx="940.3" cy="125.8" r="2.1" stroke="#f07023" stroke-width="1.1"/>
<line x1="942.6999999999999" y1="125.8" x2="944.1999999999999" y2="125.8" stroke="#f07023" stroke-width="1.2" />
<line x1="941.9970562748476" y1="127.49705627484771" x2="943.0577164466275" y2="128.55771644662752" stroke="#f07023" stroke-width="1.2" />
<line x1="940.3" y1="128.2" x2="940.3" y2="129.7" stroke="#f07023" stroke-width="1.2" />
<line x1="938.6029437251523" y1="127.49705627484771" x2="937.5422835533724" y2="128.55771644662752" stroke="#f07023" stroke-width="1.2" />
<line x1="937.9" y1="125.8" x2="936.4" y2="125.8" stroke="#f07023" stroke-width="1.2" />
<line x1="938.6029437251523" y1="124.10294372515229" x2="937.5422835533724" y2="123.04228355337246" stroke="#f07023" stroke-width="1.2" />
<line x1="940.3" y1="123.39999999999999" x2="940.3" y2="121.89999999999999" stroke="#f07023" stroke-width="1.2" />
<line x1="941.9970562748476" y1="124.10294372515229" x2="943.0577164466275" y2="123.04228355337246" stroke="#f07023" stroke-width="1.2" />
<path d="M942.6,155.2 A9.6,9.6 0 1 1 938.6,151.4" stroke="#bdbdbd" stroke-width="1.1"/>
<path d="M940.9,157 A7.3,7.3 0 1 1 937.4,153.4" stroke="#bdbdbd" stroke-width="1.1"/>
<polygon points="929.20,158.20 930.60,156.90 933.40,159.90 942.20,152.10 943.60,153.50 933.30,163.10" stroke="#f7b390" stroke-width="0.9" fill="#fff"/>
<line x1="1065.7" y1="93" x2="1065.7" y2="111.2" stroke="#1a1a1a" stroke-width="1.3" />
<line x1="1060.4" y1="111.4" x2="1070.9" y2="111.4" stroke="#1a1a1a" stroke-width="1.3" />
<line x1="1059.4" y1="95.25" x2="1072.1" y2="95.25" stroke="#1a1a1a" stroke-width="1.3" />
<circle cx="1065.7" cy="93.2" r="1.2" stroke="#1a1a1a" stroke-width="1" fill="#dcdcdc"/>
<polygon points="1059.90,95.20 1056.60,103.70 1063.20,103.70" stroke="#1a1a1a" stroke-width="1.25" stroke-linejoin="round"/>
<polygon points="1071.60,95.20 1068.30,103.70 1074.80,103.70" stroke="#1a1a1a" stroke-width="1.25" stroke-linejoin="round"/>
<line x1="1059.4" y1="123.8" x2="1059.4" y2="139.3" stroke="#1a1a1a" stroke-width="1.2" />
<line x1="1064.6" y1="123.8" x2="1064.6" y2="139.3" stroke="#1a1a1a" stroke-width="1.2" />
<line x1="1069.75" y1="129.5" x2="1069.75" y2="139.3" stroke="#1a1a1a" stroke-width="1.2" />
<polyline points="1056.80,135.90 1059.40,139.20 1062.00,135.90 1064.60,139.20 1067.20,135.90 1069.75,139.20 1072.40,135.90" fill="none" stroke="#1a1a1a" stroke-width="1.1" />
<line x1="1055.2" y1="139.7" x2="1074.9" y2="139.7" stroke="#1a1a1a" stroke-width="1.2" />
<line x1="1068.6" y1="127.6" x2="1074.2" y2="120.6" stroke="#f07023" stroke-width="1.2" />
<circle cx="1069.3" cy="121.9" r="1.25" stroke="#f07023" stroke-width="1.1"/><circle cx="1073.5" cy="126.3" r="1.25" stroke="#f07023" stroke-width="1.1"/>
<polyline points="1066.90,148.50 1060.40,148.50 1055.40,153.40 1055.40,167.25 1072.10,167.25 1072.10,158.00" fill="none" stroke="#1a1a1a" stroke-width="1.25" />
<polyline points="1060.40,148.50 1060.40,153.40 1055.40,153.40" fill="none" stroke="#1a1a1a" stroke-width="1.0" />
<line x1="1057.7" y1="158.2" x2="1060.7" y2="164.6" stroke="#1a1a1a" stroke-width="1.15" />
<line x1="1060.7" y1="158.2" x2="1057.7" y2="164.6" stroke="#1a1a1a" stroke-width="1.15" />
<polyline points="1062.30,158.20 1062.30,164.60 1065.00,164.60" fill="none" stroke="#1a1a1a" stroke-width="1.15" />
<path d="M1069.3,159.1 Q1067.9,157.79999999999998 1066.7,158.79999999999998 Q1065.9,160.0 1067.9,161.29999999999998 Q1070.1000000000001,162.79999999999998 1068.9,164.1 Q1067.5,165.2 1066.1000000000001,163.7" stroke="#1a1a1a" stroke-width="1.15"/>
<line x1="1071.8" y1="148.7" x2="1071.8" y2="154.8" stroke="#f07023" stroke-width="1.1" />
<polyline points="1069.20,152.20 1071.80,154.90 1074.40,152.20" fill="none" stroke="#f07023" stroke-width="1.1" />
<polyline points="1169.75,121.50 1163.25,121.50 1158.25,126.40 1158.25,140.25 1174.95,140.25 1174.95,131.00" fill="none" stroke="#1a1a1a" stroke-width="1.25" />
<polyline points="1163.25,121.50 1163.25,126.40 1158.25,126.40" fill="none" stroke="#1a1a1a" stroke-width="1.0" />
<line x1="1160.55" y1="131.2" x2="1163.55" y2="137.6" stroke="#1a1a1a" stroke-width="1.15" />
<line x1="1163.55" y1="131.2" x2="1160.55" y2="137.6" stroke="#1a1a1a" stroke-width="1.15" />
<polyline points="1165.15,131.20 1165.15,137.60 1167.85,137.60" fill="none" stroke="#1a1a1a" stroke-width="1.15" />
<path d="M1172.1499999999999,132.1 Q1170.75,130.79999999999998 1169.55,131.79999999999998 Q1168.75,133.0 1170.75,134.29999999999998 Q1172.95,135.79999999999998 1171.75,137.1 Q1170.35,138.2 1168.95,136.7" stroke="#1a1a1a" stroke-width="1.15"/>
<line x1="1174.8" y1="121.6" x2="1174.8" y2="127.6" stroke="#f07023" stroke-width="1.1" />
<polyline points="1172.20,124.20 1174.80,121.50 1177.40,124.20" fill="none" stroke="#f07023" stroke-width="1.1" />
<line x1="1157" y1="107.25" x2="1177.2" y2="107.25" stroke="#1a1a1a" stroke-width="1.25" />
<line x1="1157" y1="111.4" x2="1177.2" y2="111.4" stroke="#1a1a1a" stroke-width="1.25" />
<line x1="1167.1" y1="106.5" x2="1159.8" y2="102.3" stroke="#1a1a1a" stroke-width="1.25" />
<line x1="1167.1" y1="106.5" x2="1163.3" y2="100.6" stroke="#1a1a1a" stroke-width="1.25" />
<line x1="1167.1" y1="106.5" x2="1172.8" y2="100.9" stroke="#1a1a1a" stroke-width="1.25" />
<line x1="1167.1" y1="106.5" x2="1175.3" y2="103.9" stroke="#1a1a1a" stroke-width="1.25" />
<line x1="1173.9" y1="92.6" x2="1173.9" y2="99" stroke="#f07023" stroke-width="1.1" />
<polyline points="1171.30,96.40 1173.90,99.10 1176.50,96.40" fill="none" stroke="#f07023" stroke-width="1.1" />
<polyline points="1351.50,89.70 1338.30,89.70 1328.50,99.60 1328.50,128.30 1362.40,128.30 1362.40,107.00" fill="none" stroke="#1a1a1a" stroke-width="1.3" />
<polyline points="1338.30,89.70 1338.30,99.60 1328.50,99.60" fill="none" stroke="#1a1a1a" stroke-width="1.3" />
<line x1="1337.2" y1="108.2" x2="1337.2" y2="120.7" stroke="#1a1a1a" stroke-width="1.3" />
<polyline points="1351.40,108.80 1343.80,108.80 1343.80,120.70" fill="none" stroke="#1a1a1a" stroke-width="1.3" />
<line x1="1343.8" y1="114.2" x2="1350" y2="114.2" stroke="#1a1a1a" stroke-width="1.3" />
<path d="M1358.4,111.2 Q1357.6,108.6 1355.3,108.6 Q1352.3,108.6 1352.3,112 L1352.3,117.2 Q1352.3,120.6 1355.3,120.6 Q1357.7,120.6 1358.5,118" stroke="#1a1a1a" stroke-width="1.3"/>
<line x1="1362.3" y1="90.2" x2="1362.3" y2="102.3" stroke="#f07023" stroke-width="1.1" />
<polyline points="1357.30,95.00 1362.30,90.00 1367.40,95.00" fill="none" stroke="#f07023" stroke-width="1.1" />
<polyline points="1399.50,102.30 1416.90,102.30 1438.50,113.10 1438.50,128.30 1419.60,128.30 1399.50,116.90 1399.50,102.30" fill="none" stroke="#1a1a1a" stroke-width="1.3" />
<polyline points="1399.50,102.30 1419.60,113.10 1438.50,113.10" fill="none" stroke="#1a1a1a" stroke-width="1.3" />
<line x1="1419.6" y1="113.1" x2="1419.6" y2="128.3" stroke="#1a1a1a" stroke-width="1.3" />
<line x1="1425.6999999999998" y1="95.9" x2="1438.5" y2="95.9" stroke="#f07023" stroke-width="1.1" />
<line x1="1432.1" y1="89.5" x2="1432.1" y2="102.30000000000001" stroke="#f07023" stroke-width="1.1" />
<line x1="1460.5" y1="94.6" x2="1460.5" y2="126.6" stroke="#1a1a1a" stroke-width="1.25" />
<line x1="1470.4" y1="94.6" x2="1470.4" y2="126.6" stroke="#1a1a1a" stroke-width="1.25" />
<line x1="1480.25" y1="104.6" x2="1480.25" y2="126.6" stroke="#1a1a1a" stroke-width="1.25" />
<polyline points="1455.50,120.80 1460.50,126.65 1465.40,120.80 1470.40,126.65 1475.40,120.80 1480.25,126.65 1485.30,120.80" fill="none" stroke="#1a1a1a" stroke-width="1.2" />
<line x1="1451.1" y1="127.4" x2="1490.7" y2="127.4" stroke="#1a1a1a" stroke-width="1.25" />
<line x1="1477.8" y1="94.9" x2="1490.6000000000001" y2="94.9" stroke="#f07023" stroke-width="1.1" />
<line x1="1484.2" y1="88.5" x2="1484.2" y2="101.30000000000001" stroke="#f07023" stroke-width="1.1" />
<polyline points="1523.20,113.10 1509.60,105.70 1526.60,105.70 1541.90,113.10" fill="none" stroke="#1a1a1a" stroke-width="1.3" />
<polyline points="1509.60,105.70 1509.60,119.50 1523.20,128.30" fill="none" stroke="#1a1a1a" stroke-width="1.3" />
<rect x="1523.2" y="113.1" width="18.7" height="15.2" stroke="#f07023" stroke-width="1.2"/>
<line x1="1535.6999999999998" y1="95.9" x2="1548.5" y2="95.9" stroke="#f07023" stroke-width="1.1" />
<line x1="1542.1" y1="89.5" x2="1542.1" y2="102.30000000000001" stroke="#f07023" stroke-width="1.1" />
<line x1="961.6" y1="214.5" x2="980.6" y2="214.5" stroke="#1a1a1a" stroke-width="1.4" />
<polyline points="964.20,211.80 961.40,214.50 964.20,217.20" fill="none" stroke="#1a1a1a" stroke-width="1.4" />
<polyline points="978.00,211.80 980.80,214.50 978.00,217.20" fill="none" stroke="#1a1a1a" stroke-width="1.4" />
<rect x="961.25" y="221.6" width="19.5" height="8" stroke="#1a1a1a" stroke-width="1.4"/>
<line x1="965.6" y1="221.6" x2="965.6" y2="225.0" stroke="#1a1a1a" stroke-width="1.3" />
<line x1="969.9" y1="221.6" x2="969.9" y2="224.2" stroke="#1a1a1a" stroke-width="1.3" />
<line x1="974.2" y1="221.6" x2="974.2" y2="225.0" stroke="#1a1a1a" stroke-width="1.3" />
<line x1="978.3" y1="221.6" x2="978.3" y2="224.2" stroke="#1a1a1a" stroke-width="1.3" />
<line x1="994.3" y1="211.4" x2="998.9" y2="216.0" stroke="#1a1a1a" stroke-width="1.3" />
<polyline points="997.70,211.40 994.30,211.40 994.30,214.80" fill="none" stroke="#1a1a1a" stroke-width="1.3" />
<line x1="1011.2" y1="211.4" x2="1006.6" y2="216.0" stroke="#1a1a1a" stroke-width="1.3" />
<polyline points="1007.80,211.40 1011.20,211.40 1011.20,214.80" fill="none" stroke="#1a1a1a" stroke-width="1.3" />
<line x1="994.3" y1="227.9" x2="998.9" y2="223.3" stroke="#1a1a1a" stroke-width="1.3" />
<polyline points="997.70,227.90 994.30,227.90 994.30,224.50" fill="none" stroke="#1a1a1a" stroke-width="1.3" />
<line x1="1011.2" y1="227.9" x2="1006.6" y2="223.3" stroke="#1a1a1a" stroke-width="1.3" />
<polyline points="1007.80,227.90 1011.20,227.90 1011.20,224.50" fill="none" stroke="#1a1a1a" stroke-width="1.3" />
<path d="M1033.2,213.9 C1027.5,216.3 1024.3,221.5 1025,225.5 C1025.8,229.6 1030,230.2 1033.6,228" stroke="#1a1a1a" stroke-width="1.4"/>
<polyline points="1028.60,212.50 1033.50,213.70 1032.30,218.80" fill="none" stroke="#1a1a1a" stroke-width="1.4" />
<path d="M1036.2,211.7 C1040.5,209.2 1044.5,210.3 1044.9,214.3 C1045.2,218.5 1041.8,223.3 1037,227" stroke="#1a1a1a" stroke-width="1.4"/>
<polyline points="1036.70,222.30 1036.70,227.30 1042.30,227.30" fill="none" stroke="#1a1a1a" stroke-width="1.4" />
<polyline points="1054.50,218.30 1058.90,222.50 1063.60,218.30" fill="none" stroke="#1a1a1a" stroke-width="1.2" />
<line x1="1083.1" y1="210.8" x2="1083.1" y2="225.8" stroke="#cdcdcd" stroke-width="1.7" />
<line x1="1082.3" y1="225.8" x2="1098.6" y2="225.8" stroke="#cdcdcd" stroke-width="1.7" />
<line x1="1079.4" y1="214.3" x2="1095.9" y2="214.3" stroke="#cdcdcd" stroke-width="1.7" />
<line x1="1095.1" y1="214.3" x2="1095.1" y2="229.5" stroke="#cdcdcd" stroke-width="1.7" />
<polyline points="1109.40,218.30 1113.90,222.50 1118.75,218.30" fill="none" stroke="#1a1a1a" stroke-width="1.2" />
<rect x="1130.4" y="216.4" width="13.1" height="13.1" stroke="#1a1a1a" stroke-width="1.5"/>
<polyline points="1130.40,216.40 1136.40,210.40 1149.50,210.40 1149.50,223.50 1143.50,229.50" fill="none" stroke="#1a1a1a" stroke-width="1.5" />
<line x1="1143.5" y1="216.4" x2="1149.5" y2="210.4" stroke="#1a1a1a" stroke-width="1.5" />
<line x1="1136.4" y1="210.4" x2="1136.4" y2="213" stroke="#1a1a1a" stroke-width="1.1" />
<line x1="1136.4" y1="219" x2="1136.4" y2="223.5" stroke="#1a1a1a" stroke-width="1.1" />
<line x1="1136.4" y1="223.5" x2="1139.8000000000002" y2="223.5" stroke="#1a1a1a" stroke-width="1.1" />
<line x1="1145.9" y1="223.5" x2="1149.5" y2="223.5" stroke="#1a1a1a" stroke-width="1.1" />
<line x1="1136.4" y1="223.5" x2="1130.4" y2="229.5" stroke="#1a1a1a" stroke-width="1.1" />
<polygon points="1162.40,216.40 1168.40,210.40 1181.50,210.40 1181.50,223.50 1175.50,229.50 1162.40,229.50" fill="#c6c6c6"/>
<rect x="1162.4" y="216.4" width="13.1" height="13.1" stroke="#1a1a1a" stroke-width="1.5"/>
<polyline points="1162.40,216.40 1168.40,210.40 1181.50,210.40 1181.50,223.50 1175.50,229.50" fill="none" stroke="#1a1a1a" stroke-width="1.5" />
<line x1="1175.5" y1="216.4" x2="1181.5" y2="210.4" stroke="#1a1a1a" stroke-width="1.5" />
<line x1="1168.4" y1="210.4" x2="1168.4" y2="213" stroke="#1a1a1a" stroke-width="1.1" />
<line x1="1168.4" y1="219" x2="1168.4" y2="223.5" stroke="#1a1a1a" stroke-width="1.1" />
<line x1="1168.4" y1="223.5" x2="1171.8000000000002" y2="223.5" stroke="#1a1a1a" stroke-width="1.1" />
<line x1="1177.9" y1="223.5" x2="1181.5" y2="223.5" stroke="#1a1a1a" stroke-width="1.1" />
<line x1="1168.4" y1="223.5" x2="1162.4" y2="229.5" stroke="#1a1a1a" stroke-width="1.1" />
<polygon points="1194.20,216.40 1200.40,210.40 1213.80,210.40 1213.80,223.50 1207.50,229.75 1194.20,229.75" fill="#000"/>
<polyline points="1194.20,216.60 1207.40,216.60 1213.40,210.80" fill="none" stroke="#c8c8c8" stroke-width="1.0" />
<line x1="1207.4" y1="216.6" x2="1207.4" y2="229.75" stroke="#c8c8c8" stroke-width="1.0" />
<polyline points="1229.40,215.30 1242.50,213.10 1248.80,214.00 1248.80,219.70 1235.90,227.30 1229.40,223.50 1229.40,215.30" fill="none" stroke="#1a1a1a" stroke-width="1.5" stroke-linejoin="round"/>
<polyline points="1229.40,215.30 1235.90,218.50 1248.80,214.00" fill="none" stroke="#1a1a1a" stroke-width="1.5" stroke-linejoin="round"/>
<line x1="1235.9" y1="218.5" x2="1235.9" y2="227.3" stroke="#1a1a1a" stroke-width="1.5" />
<line x1="1269.3" y1="210.4" x2="1269.3" y2="229.75" stroke="#cdcdcd" stroke-width="1.4" />
<line x1="1272.8" y1="210.4" x2="1272.8" y2="229.75" stroke="#cdcdcd" stroke-width="1.4" />
<path d="M1264.5,224.6 A9.6,3.8 0 1 1 1277,224.6" stroke="#cdcdcd" stroke-width="1.3"/>
<polygon points="1262.60,224.90 1266.60,222.30 1266.60,227.30" fill="#cdcdcd"/>
<line x1="1266" y1="224.9" x2="1277" y2="224.9" stroke="#cdcdcd" stroke-width="1.2" />
<polyline points="1293.60,218.60 1302.90,211.50 1312.30,218.60" fill="none" stroke="#1a1a1a" stroke-width="1.3" stroke-linejoin="miter"/>
<polyline points="1296.10,216.80 1296.10,227.90 1300.50,227.90 1300.50,221.90 1305.40,221.90 1305.40,227.90 1310.10,227.90 1310.10,216.80" fill="none" stroke="#1a1a1a" stroke-width="1.3" />
<ellipse cx="1262.5" cy="332.5" rx="41.7" ry="21.5" stroke="#dedede" stroke-width="10.5"/>
<polygon points="1255.40,277.50 1292.60,285.00 1289.50,320.70 1271.30,344.80 1233.60,329.80 1229.50,292.00" fill="#b3b3b3"/>
<polyline points="1255.40,277.50 1292.60,285.00 1272.40,302.50 1229.50,292.00 1255.40,277.50" fill="none" stroke="#8a8a8a" stroke-width="1.0" stroke-linejoin="round"/>
<polyline points="1229.50,292.00 1233.60,329.80 1271.30,344.80 1272.40,302.50" fill="none" stroke="#8a8a8a" stroke-width="1.0" stroke-linejoin="round"/>
<polyline points="1271.30,344.80 1289.50,320.70 1292.60,285.00" fill="none" stroke="#8a8a8a" stroke-width="1.0" stroke-linejoin="round"/>
<polyline points="1255.40,277.50 1256.20,311.60 1233.60,329.80" fill="none" stroke="#8a8a8a" stroke-width="1.0" stroke-linejoin="round"/>
<polyline points="1256.20,311.60 1289.50,320.70" fill="none" stroke="#8a8a8a" stroke-width="1.0" stroke-linejoin="round"/>
<g stroke="#f4f4f4" stroke-width="1.3">
<line x1="1252.4" y1="316.6" x2="1254.1" y2="320.2"/><line x1="1255.9" y1="317" x2="1254.1" y2="320.2"/><line x1="1254.1" y1="320.2" x2="1254.1" y2="324"/>
<line x1="1247.6" y1="319.3" x2="1250.4" y2="319.8" stroke-width="0.9"/><line x1="1249" y1="317.9" x2="1249" y2="321.2" stroke-width="0.9"/>
<path d="M1260,288.5 l3,-1 l0.8,1.2 l2.5,-1" stroke-width="1"/><path d="M1261.5,290.8 l4.5,-1.2" stroke-width="1"/>
<path d="M1283.6,310.5 l-1,5.5 l-1.2,2.6" stroke-width="1"/>
</g>
<g stroke="#6e6e6e">
<line x1="1231.6" y1="346.3" x2="1235" y2="352.4" stroke-width="2.2"/><line x1="1243" y1="349" x2="1235" y2="352.4" stroke-width="2.2"/><line x1="1235" y1="352.4" x2="1228.3" y2="357.2" stroke-width="2.2" stroke="#8a8a8a"/>
<line x1="1225.6" y1="309.4" x2="1228" y2="315.4" stroke-width="1.5"/><line x1="1228.6" y1="309.2" x2="1225.2" y2="315.6" stroke-width="1.5"/>
<line x1="1219.5" y1="313.4" x2="1231" y2="311" stroke-width="0.8" stroke="#999"/>
<line x1="1298.2" y1="337.3" x2="1311.2" y2="341.2" stroke-width="0.9" stroke="#999"/><polyline points="1308.3,338.9 1311.6,341.3 1308,342.6" stroke-width="0.9" stroke="#999"/>
</g>
<polygon points="1136.25,384.00 1144.10,384.00 1144.10,376.50" fill="#3c3c3c"/>
<polygon points="1161.25,411.90 1169.10,411.90 1169.10,404.40" fill="#3c3c3c"/>
<polygon points="1161.25,523.80 1169.10,523.80 1169.10,516.30" fill="#3c3c3c"/>
<polygon points="1161.25,579.60 1169.10,579.60 1169.10,572.10" fill="#3c3c3c"/>
<rect x="1184.1" y="430.1" width="13.9" height="12.9" rx="2.4" fill="#e4e4e4"/>
<polyline points="1187.60,437.00 1191.50,440.90 1200.10,428.80" stroke="#ff8a0d" stroke-width="2.7" stroke-linejoin="miter"/>
<rect x="1184.1" y="458.2" width="13.9" height="12.9" rx="2.4" fill="#e4e4e4"/>
<polyline points="1187.60,465.10 1191.50,469.00 1200.10,456.90" stroke="#ff8a0d" stroke-width="2.7" stroke-linejoin="miter"/>
<rect x="1184.1" y="485.9" width="13.9" height="12.9" rx="2.4" fill="#e4e4e4"/>
<polyline points="1187.60,492.80 1191.50,496.70 1200.10,484.60" stroke="#ff8a0d" stroke-width="2.7" stroke-linejoin="miter"/>
<rect x="1184.1" y="541.95" width="13.9" height="12.9" rx="2.4" fill="#e4e4e4"/>
<polyline points="1187.60,548.85 1191.50,552.75 1200.10,540.65" stroke="#ff8a0d" stroke-width="2.7" stroke-linejoin="miter"/>
<rect x="1184.1" y="597.9" width="13.9" height="12.9" rx="2.4" fill="#e4e4e4"/>
<polyline points="1187.60,604.80 1191.50,608.70 1200.10,596.60" stroke="#ff8a0d" stroke-width="2.7" stroke-linejoin="miter"/>
<polyline points="1366.20,339.30 1372.70,344.60 1366.20,349.90" fill="none" stroke="#2a2a2a" stroke-width="1.4" />
</svg>
<div id="txt" style="position:absolute;left:0;top:0;width:1920px;height:1200px;will-change:transform;">
<span class="t" style="left:107.74px;top:8.39px;font-size:26.00px;line-height:26.00px;letter-spacing:-0.273px;color:#fff;font-weight:700;font-style:italic;">StatiCa</span>
<span class="t" style="left:197.90px;top:12.38px;font-size:9.00px;line-height:9.00px;letter-spacing:0.000px;color:#fff;transform:scaleX(1.1574);transform-origin:0 0;">®</span>
<span class="t" style="left:227.91px;top:10.35px;font-size:21.80px;line-height:21.80px;letter-spacing:-0.903px;color:#fff;font-style:italic;-webkit-text-stroke:0.45px #fff;">CONNECTION</span>
<span class="t" style="left:18.38px;top:43.22px;font-size:12.50px;line-height:12.50px;letter-spacing:-0.117px;color:#fff;font-style:italic;-webkit-text-stroke:0.3px #fff;">Calculate yesterday's estimates</span>
<span class="t" style="left:808.55px;top:13.18px;font-size:18.10px;line-height:18.10px;letter-spacing:-0.125px;color:#fff;">Footing with diagonal (AISC).ideaCon</span>
<span class="t" style="left:306.84px;top:51.03px;font-size:15.20px;line-height:15.20px;letter-spacing:-0.345px;color:#fff;font-weight:700;">Project</span>
<span class="t" style="left:437.84px;top:51.03px;font-size:15.20px;line-height:15.20px;letter-spacing:-0.268px;color:#fff;font-weight:700;">Design</span>
<span class="t" style="left:569.14px;top:51.03px;font-size:15.20px;line-height:15.20px;letter-spacing:-0.643px;color:#fff;font-weight:700;">Check</span>
<span class="t" style="left:695.84px;top:51.03px;font-size:15.20px;line-height:15.20px;letter-spacing:-0.104px;color:#fff;font-weight:700;">Report</span>
<span class="t" style="left:815.59px;top:51.03px;font-size:15.20px;line-height:15.20px;letter-spacing:0.070px;color:#fff;font-weight:700;">Materials</span>
<span class="t" style="left:14.71px;top:97.37px;font-size:16.10px;line-height:16.10px;letter-spacing:-0.218px;color:#fff;">Footing with diagonal</span>
<span class="t" style="left:198.72px;top:133.86px;font-size:16.00px;line-height:16.00px;letter-spacing:-0.677px;color:#1e1e1e;">New</span>
<span class="t" style="left:243.70px;top:133.86px;font-size:16.00px;line-height:16.00px;letter-spacing:-0.960px;color:#1e1e1e;transform:scaleX(0.9949);transform-origin:0 0;">Copy</span>
<span class="t" style="left:99.59px;top:178.73px;font-size:15.20px;line-height:15.20px;letter-spacing:-0.250px;color:#f9b48c;font-weight:700;">Project items</span>
<span class="t" style="left:333.38px;top:109.06px;font-size:16.00px;line-height:16.00px;letter-spacing:-0.684px;color:#1e1e1e;">Undo</span>
<span class="t" style="left:406.11px;top:109.06px;font-size:16.00px;line-height:16.00px;letter-spacing:-0.960px;color:#1e1e1e;transform:scaleX(0.9206);transform-origin:0 0;">Save</span>
<span class="t" style="left:333.74px;top:139.06px;font-size:16.00px;line-height:16.00px;letter-spacing:-0.960px;color:#c4c4c4;transform:scaleX(0.9847);transform-origin:0 0;">Redo</span>
<span class="t" style="left:354.77px;top:178.56px;font-size:15.40px;line-height:15.40px;letter-spacing:-0.452px;color:#a8a8a8;">Data</span>
<span class="t" style="left:459.72px;top:133.66px;font-size:16.00px;line-height:16.00px;letter-spacing:-0.425px;color:#1e1e1e;">Project</span>
<span class="t" style="left:459.18px;top:153.66px;font-size:16.00px;line-height:16.00px;letter-spacing:-0.549px;color:#1e1e1e;">settings</span>
<span class="t" style="left:458.88px;top:178.56px;font-size:15.40px;line-height:15.40px;letter-spacing:-0.132px;color:#a8a8a8;">Options</span>
<span class="t" style="left:554.22px;top:94.06px;font-size:16.00px;line-height:16.00px;letter-spacing:-0.620px;color:#1e1e1e;">Members</span>
<span class="t" style="left:554.22px;top:122.06px;font-size:16.00px;line-height:16.00px;letter-spacing:-0.902px;color:#1e1e1e;">Plates</span>
<span class="t" style="left:554.47px;top:150.26px;font-size:16.00px;line-height:16.00px;letter-spacing:-0.960px;color:#1e1e1e;transform:scaleX(0.8049);transform-origin:0 0;">LCS</span>
<span class="t" style="left:552.47px;top:178.56px;font-size:15.40px;line-height:15.40px;letter-spacing:-0.577px;color:#a8a8a8;">Labels</span>
<span class="t" style="left:664.72px;top:109.06px;font-size:16.00px;line-height:16.00px;letter-spacing:-0.677px;color:#1e1e1e;">New</span>
<span class="t" style="left:665.20px;top:139.06px;font-size:16.00px;line-height:16.00px;letter-spacing:-0.697px;color:#1e1e1e;">Gallery</span>
<span class="t" style="left:648.27px;top:178.56px;font-size:15.40px;line-height:15.40px;letter-spacing:-0.562px;color:#a8a8a8;">Pictures</span>
<span class="t" style="left:761.22px;top:109.06px;font-size:16.00px;line-height:16.00px;letter-spacing:-0.873px;color:#1e1e1e;">Propose</span>
<span class="t" style="left:851.22px;top:109.06px;font-size:16.00px;line-height:16.00px;letter-spacing:-0.592px;color:#1e1e1e;">Manage</span>
<span class="t" style="left:761.22px;top:139.06px;font-size:16.00px;line-height:16.00px;letter-spacing:-0.683px;color:#1e1e1e;">Publish</span>
<span class="t" style="left:757.23px;top:178.56px;font-size:15.40px;line-height:15.40px;letter-spacing:-0.264px;color:#a8a8a8;">Connection Library</span>
<span class="t" style="left:954.70px;top:96.46px;font-size:16.00px;line-height:16.00px;letter-spacing:-0.666px;color:#1e1e1e;">Calculate</span>
<span class="t" style="left:949.20px;top:125.26px;font-size:16.00px;line-height:16.00px;letter-spacing:-0.562px;color:#1e1e1e;">Weld sizing</span>
<span class="t" style="left:950.06px;top:152.26px;font-size:16.00px;line-height:16.00px;letter-spacing:-0.762px;color:#c8c8c8;">Overall check</span>
<span class="t" style="left:958.48px;top:178.56px;font-size:15.40px;line-height:15.40px;letter-spacing:-0.924px;color:#a8a8a8;transform:scaleX(0.9377);transform-origin:0 0;">CBFEM</span>
<span class="t" style="left:1080.18px;top:151.46px;font-size:16.00px;line-height:16.00px;letter-spacing:-0.861px;color:#1e1e1e;">XLS Import</span>
<span class="t" style="left:1181.70px;top:95.26px;font-size:16.00px;line-height:16.00px;letter-spacing:-0.436px;color:#1e1e1e;">Connection Import</span>
<span class="t" style="left:1187.69px;top:124.46px;font-size:16.00px;line-height:16.00px;letter-spacing:-0.960px;color:#1e1e1e;transform:scaleX(0.9819);transform-origin:0 0;">XLS Export</span>
<span class="t" style="left:1161.27px;top:178.56px;font-size:15.40px;line-height:15.40px;letter-spacing:-0.516px;color:#a8a8a8;">Loads</span>
<span class="t" style="left:1337.78px;top:133.66px;font-size:16.00px;line-height:16.00px;letter-spacing:-0.960px;color:#1e1e1e;transform:scaleX(0.8448);transform-origin:0 0;">IFC</span>
<span class="t" style="left:1326.77px;top:178.56px;font-size:15.40px;line-height:15.40px;letter-spacing:-0.262px;color:#a8a8a8;">Export</span>
<span class="t" style="left:1389.42px;top:133.66px;font-size:16.00px;line-height:16.00px;letter-spacing:-0.378px;color:#1e1e1e;">Member</span>
<span class="t" style="left:1452.72px;top:132.86px;font-size:16.00px;line-height:16.00px;letter-spacing:-0.472px;color:#1e1e1e;">Load</span>
<span class="t" style="left:1494.06px;top:133.66px;font-size:16.00px;line-height:16.00px;letter-spacing:-0.241px;color:#1e1e1e;">Operation</span>
<span class="t" style="left:1459.77px;top:178.56px;font-size:15.40px;line-height:15.40px;letter-spacing:-0.098px;color:#a8a8a8;">New</span>
<span class="t" style="left:983.09px;top:258.93px;font-size:15.20px;line-height:15.20px;letter-spacing:-0.295px;color:#f07023;font-weight:700;">Production cost</span>
<span class="t" style="left:1101.28px;top:258.93px;font-size:15.20px;line-height:15.20px;letter-spacing:0.000px;color:#333;transform:scaleX(1.1842);transform-origin:0 0;">-</span>
<span class="t" style="left:1113.09px;top:258.93px;font-size:15.20px;line-height:15.20px;letter-spacing:-0.524px;color:#111;font-weight:700;">144 US$</span>
<span class="t" style="left:1158.50px;top:369.90px;font-size:15.00px;line-height:15.00px;letter-spacing:0.151px;color:#3a3a3a;font-weight:700;">Footing with diago...</span>
<span class="t" style="left:1183.90px;top:398.00px;font-size:15.00px;line-height:15.00px;letter-spacing:0.130px;color:#3a3a3a;font-weight:700;">Members</span>
<span class="t" style="left:1210.27px;top:428.73px;font-size:15.20px;line-height:15.20px;letter-spacing:-0.912px;color:#3a3a3a;text-decoration:underline;text-underline-offset:2px;transform:scaleX(0.9550);transform-origin:0 0;">COL</span>
<span class="t" style="left:1209.73px;top:456.83px;font-size:15.20px;line-height:15.20px;letter-spacing:0.912px;color:#3a3a3a;transform:scaleX(1.0443);transform-origin:0 0;">M2</span>
<span class="t" style="left:1209.74px;top:484.53px;font-size:15.20px;line-height:15.20px;letter-spacing:0.912px;color:#3a3a3a;transform:scaleX(1.0364);transform-origin:0 0;">M3</span>
<span class="t" style="left:1183.90px;top:509.90px;font-size:15.00px;line-height:15.00px;letter-spacing:-0.246px;color:#3a3a3a;font-weight:700;">Load effects</span>
<span class="t" style="left:1210.66px;top:540.83px;font-size:15.20px;line-height:15.20px;letter-spacing:-0.912px;color:#fff;transform:scaleX(0.8582);transform-origin:0 0;">LE1</span>
<span class="t" style="left:1184.20px;top:565.70px;font-size:15.00px;line-height:15.00px;letter-spacing:-0.093px;color:#3a3a3a;font-weight:700;">Operations</span>
<span class="t" style="left:1209.83px;top:596.53px;font-size:15.20px;line-height:15.20px;letter-spacing:-0.912px;color:#3a3a3a;transform:scaleX(0.9604);transform-origin:0 0;">BP1</span>
<span class="t" style="left:1350.65px;top:209.13px;font-size:15.20px;line-height:15.20px;letter-spacing:-0.912px;color:#fff;font-weight:700;transform:scaleX(0.9296);transform-origin:0 0;">LE1</span>
<span class="t" style="left:1388.94px;top:209.13px;font-size:15.20px;line-height:15.20px;letter-spacing:0.056px;color:#fff;">[ Load ]</span>
<span class="t" style="left:1813.39px;top:209.13px;font-size:15.20px;line-height:15.20px;letter-spacing:-0.912px;color:#fff;font-weight:700;">Copy</span>
<span class="t" style="left:1861.09px;top:209.13px;font-size:15.20px;line-height:15.20px;letter-spacing:0.037px;color:#fff;font-weight:700;">Delete</span>
<span class="t" style="left:1392.73px;top:260.00px;font-size:14.80px;line-height:14.80px;letter-spacing:0.410px;color:#3a3a3a;font-weight:700;">Member</span>
<span class="t" style="left:1468.45px;top:250.16px;font-size:14.80px;line-height:14.80px;letter-spacing:0.000px;color:#3a3a3a;font-weight:700;transform:scaleX(1.2000);transform-origin:0 0;">N</span>
<span class="t" style="left:1468.78px;top:269.83px;font-size:14.80px;line-height:14.80px;letter-spacing:0.331px;color:#3a3a3a;font-weight:700;">[kip]</span>
<span class="t" style="left:1531.29px;top:250.16px;font-size:14.80px;line-height:14.80px;letter-spacing:-0.093px;color:#3a3a3a;font-weight:700;">Vy</span>
<span class="t" style="left:1530.55px;top:269.83px;font-size:14.80px;line-height:14.80px;letter-spacing:0.408px;color:#3a3a3a;font-weight:700;">[kip]</span>
<span class="t" style="left:1594.29px;top:250.16px;font-size:14.80px;line-height:14.80px;letter-spacing:-0.540px;color:#3a3a3a;font-weight:700;">Vz</span>
<span class="t" style="left:1593.55px;top:269.83px;font-size:14.80px;line-height:14.80px;letter-spacing:0.408px;color:#3a3a3a;font-weight:700;">[kip]</span>
<span class="t" style="left:1656.36px;top:250.16px;font-size:14.80px;line-height:14.80px;letter-spacing:0.888px;color:#3a3a3a;font-weight:700;transform:scaleX(1.0510);transform-origin:0 0;">Mx</span>
<span class="t" style="left:1656.55px;top:269.83px;font-size:14.80px;line-height:14.80px;letter-spacing:0.564px;color:#3a3a3a;font-weight:700;">[kip.ft]</span>
<span class="t" style="left:1718.47px;top:250.16px;font-size:14.80px;line-height:14.80px;letter-spacing:0.888px;color:#3a3a3a;font-weight:700;transform:scaleX(1.0136);transform-origin:0 0;">My</span>
<span class="t" style="left:1718.63px;top:269.83px;font-size:14.80px;line-height:14.80px;letter-spacing:0.564px;color:#3a3a3a;font-weight:700;">[kip.ft]</span>
<span class="t" style="left:1780.50px;top:250.16px;font-size:14.80px;line-height:14.80px;letter-spacing:0.888px;color:#3a3a3a;font-weight:700;transform:scaleX(1.0677);transform-origin:0 0;">Mz</span>
<span class="t" style="left:1780.70px;top:269.83px;font-size:14.80px;line-height:14.80px;letter-spacing:0.564px;color:#3a3a3a;font-weight:700;">[kip.ft]</span>
<span class="t" style="left:1392.24px;top:301.15px;font-size:15.20px;line-height:15.20px;letter-spacing:-0.487px;color:#3c3c3c;">COL / End</span>
<span class="t" style="left:1468.91px;top:301.15px;font-size:15.20px;line-height:15.20px;letter-spacing:-0.337px;color:#3c3c3c;">-300.0</span>
<span class="t" style="left:1530.83px;top:301.15px;font-size:15.20px;line-height:15.20px;letter-spacing:-0.843px;color:#3c3c3c;">0.0</span>
<span class="t" style="left:1593.83px;top:301.15px;font-size:15.20px;line-height:15.20px;letter-spacing:-0.843px;color:#3c3c3c;">0.0</span>
<span class="t" style="left:1656.83px;top:301.15px;font-size:15.20px;line-height:15.20px;letter-spacing:-0.689px;color:#3c3c3c;">0.0</span>
<span class="t" style="left:1718.91px;top:301.15px;font-size:15.20px;line-height:15.20px;letter-spacing:-0.689px;color:#3c3c3c;">0.0</span>
<span class="t" style="left:1780.99px;top:301.15px;font-size:15.20px;line-height:15.20px;letter-spacing:-0.689px;color:#3c3c3c;">0.0</span>
<span class="t" style="left:1391.78px;top:337.10px;font-size:15.20px;line-height:15.20px;letter-spacing:0.079px;color:#3c3c3c;">M2 / End</span>
<span class="t" style="left:1468.91px;top:337.10px;font-size:15.20px;line-height:15.20px;letter-spacing:-0.305px;color:#3c3c3c;">-20.0</span>
<span class="t" style="left:1530.83px;top:337.10px;font-size:15.20px;line-height:15.20px;letter-spacing:-0.843px;color:#3c3c3c;">0.0</span>
<span class="t" style="left:1593.83px;top:337.10px;font-size:15.20px;line-height:15.20px;letter-spacing:-0.843px;color:#3c3c3c;">0.0</span>
<span class="t" style="left:1657.60px;top:337.10px;font-size:15.20px;line-height:15.20px;letter-spacing:-0.688px;color:#a0a0a0;font-style:italic;">0.0</span>
<span class="t" style="left:1719.68px;top:337.10px;font-size:15.20px;line-height:15.20px;letter-spacing:-0.688px;color:#a0a0a0;font-style:italic;">0.0</span>
<span class="t" style="left:1781.76px;top:337.10px;font-size:15.20px;line-height:15.20px;letter-spacing:-0.688px;color:#a0a0a0;font-style:italic;">0.0</span>
<span class="t" style="left:1391.78px;top:373.06px;font-size:15.20px;line-height:15.20px;letter-spacing:0.079px;color:#3c3c3c;">M3 / End</span>
<span class="t" style="left:1468.76px;top:373.06px;font-size:15.20px;line-height:15.20px;letter-spacing:-0.845px;color:#3c3c3c;">2.5</span>
<span class="t" style="left:1530.83px;top:373.06px;font-size:15.20px;line-height:15.20px;letter-spacing:-0.843px;color:#3c3c3c;">0.0</span>
<span class="t" style="left:1593.68px;top:373.06px;font-size:15.20px;line-height:15.20px;letter-spacing:-0.228px;color:#3c3c3c;">-20.0</span>
<span class="t" style="left:1656.83px;top:373.06px;font-size:15.20px;line-height:15.20px;letter-spacing:-0.689px;color:#3c3c3c;">0.0</span>
<span class="t" style="left:1718.61px;top:373.06px;font-size:15.20px;line-height:15.20px;letter-spacing:-0.615px;color:#3c3c3c;">70.0</span>
<span class="t" style="left:1780.99px;top:373.06px;font-size:15.20px;line-height:15.20px;letter-spacing:-0.689px;color:#3c3c3c;">0.0</span>
<span class="t" style="left:1350.90px;top:419.58px;font-size:14.70px;line-height:14.70px;letter-spacing:-0.006px;color:#444;">Values in disabled cells are not taken into account in CBFEM</span>
<span class="t" style="left:1350.31px;top:439.25px;font-size:14.70px;line-height:14.70px;letter-spacing:0.120px;color:#444;">analysis. Members can be loaded only by that components of</span>
<span class="t" style="left:1350.02px;top:459.22px;font-size:14.70px;line-height:14.70px;letter-spacing:0.245px;color:#444;">internal forces which are defined in member "Model type".</span>
<span class="t" style="left:1350.44px;top:1042.42px;font-size:17.80px;line-height:17.80px;letter-spacing:-0.013px;color:#3a3a3a;font-weight:700;">Unbalanced forces</span>
<span class="t" style="left:1357.66px;top:1069.24px;font-size:14.80px;line-height:14.80px;letter-spacing:0.000px;color:#3a3a3a;font-weight:700;transform:scaleX(0.9438);transform-origin:0 0;">X</span>
<span class="t" style="left:1356.92px;top:1088.91px;font-size:14.80px;line-height:14.80px;letter-spacing:0.331px;color:#3a3a3a;font-weight:700;">[kip]</span>
<span class="t" style="left:1426.37px;top:1069.24px;font-size:14.80px;line-height:14.80px;letter-spacing:0.000px;color:#3a3a3a;font-weight:700;transform:scaleX(0.8306);transform-origin:0 0;">Y</span>
<span class="t" style="left:1425.76px;top:1088.91px;font-size:14.80px;line-height:14.80px;letter-spacing:0.408px;color:#3a3a3a;font-weight:700;">[kip]</span>
<span class="t" style="left:1495.35px;top:1069.24px;font-size:14.80px;line-height:14.80px;letter-spacing:0.000px;color:#3a3a3a;font-weight:700;transform:scaleX(0.9836);transform-origin:0 0;">Z</span>
<span class="t" style="left:1494.90px;top:1088.91px;font-size:14.80px;line-height:14.80px;letter-spacing:0.331px;color:#3a3a3a;font-weight:700;">[kip]</span>
<span class="t" style="left:1562.63px;top:1069.24px;font-size:14.80px;line-height:14.80px;letter-spacing:0.888px;color:#3a3a3a;font-weight:700;transform:scaleX(1.0510);transform-origin:0 0;">Mx</span>
<span class="t" style="left:1562.82px;top:1088.91px;font-size:14.80px;line-height:14.80px;letter-spacing:0.520px;color:#3a3a3a;font-weight:700;">[kip.ft]</span>
<span class="t" style="left:1631.80px;top:1069.24px;font-size:14.80px;line-height:14.80px;letter-spacing:0.888px;color:#3a3a3a;font-weight:700;transform:scaleX(1.0136);transform-origin:0 0;">My</span>
<span class="t" style="left:1631.96px;top:1088.91px;font-size:14.80px;line-height:14.80px;letter-spacing:0.520px;color:#3a3a3a;font-weight:700;">[kip.ft]</span>
<span class="t" style="left:1700.59px;top:1069.24px;font-size:14.80px;line-height:14.80px;letter-spacing:0.888px;color:#3a3a3a;font-weight:700;transform:scaleX(1.0677);transform-origin:0 0;">Mz</span>
<span class="t" style="left:1700.80px;top:1088.91px;font-size:14.80px;line-height:14.80px;letter-spacing:0.520px;color:#3a3a3a;font-weight:700;">[kip.ft]</span>
<span class="t" style="left:1357.05px;top:1119.92px;font-size:15.20px;line-height:15.20px;letter-spacing:-0.023px;color:#3c3c3c;">-11.6</span>
<span class="t" style="left:1425.73px;top:1119.92px;font-size:15.20px;line-height:15.20px;letter-spacing:-0.689px;color:#3c3c3c;">0.0</span>
<span class="t" style="left:1495.03px;top:1119.92px;font-size:15.20px;line-height:15.20px;letter-spacing:-0.491px;color:#3c3c3c;">-334.1</span>
<span class="t" style="left:1563.10px;top:1119.92px;font-size:15.20px;line-height:15.20px;letter-spacing:-0.689px;color:#3c3c3c;">0.0</span>
<span class="t" style="left:1631.94px;top:1119.92px;font-size:15.20px;line-height:15.20px;letter-spacing:-0.717px;color:#3c3c3c;">70.0</span>
<span class="t" style="left:1701.09px;top:1119.92px;font-size:15.20px;line-height:15.20px;letter-spacing:-0.689px;color:#3c3c3c;">0.0</span>
<span class="t" style="left:29.09px;top:1173.22px;font-size:15.10px;line-height:15.10px;letter-spacing:-0.364px;color:#8c8c8c;font-weight:700;">Design code:</span>
<span class="t" style="left:124.70px;top:1173.22px;font-size:15.10px;line-height:15.10px;letter-spacing:-0.097px;color:#fff;font-weight:700;">AISC - LRFD (2022)</span>
<span class="t" style="left:285.70px;top:1173.22px;font-size:15.10px;line-height:15.10px;letter-spacing:-0.492px;color:#8c8c8c;font-weight:700;">Analysis:</span>
<span class="t" style="left:353.70px;top:1173.22px;font-size:15.10px;line-height:15.10px;letter-spacing:-0.381px;color:#fff;font-weight:700;">Stress, strain</span>
<span class="t" style="left:468.59px;top:1173.22px;font-size:15.10px;line-height:15.10px;letter-spacing:-0.222px;color:#8c8c8c;font-weight:700;">Load effects:</span>
<span class="t" style="left:564.09px;top:1173.22px;font-size:15.10px;line-height:15.10px;letter-spacing:0.024px;color:#fff;font-weight:700;">In equilibrium</span>
<span class="t" style="left:687.59px;top:1173.22px;font-size:15.10px;line-height:15.10px;letter-spacing:-0.194px;color:#8c8c8c;font-weight:700;">Units:</span>
<span class="t" style="left:738.09px;top:1173.22px;font-size:15.10px;line-height:15.10px;letter-spacing:0.906px;color:#fff;font-weight:700;">in</span>
<span class="t" style="left:1766.56px;top:1172.28px;font-size:15.50px;line-height:15.50px;letter-spacing:0.930px;color:#f07023;transform:scaleX(1.0255);transform-origin:0 0;">www.</span>
<span class="t" style="left:1805.57px;top:1172.28px;font-size:15.50px;line-height:15.50px;letter-spacing:-0.523px;color:#fff;">ideastatica</span>
<span class="t" style="left:1873.61px;top:1172.28px;font-size:15.50px;line-height:15.50px;letter-spacing:-0.306px;color:#f07023;">.com</span>
<span class="t" style="left:638.46px;top:256.57px;font-size:13.50px;line-height:13.50px;letter-spacing:0.550px;color:#222;">-300.0</span>
<span class="t" style="left:901.46px;top:286.57px;font-size:13.50px;line-height:13.50px;letter-spacing:0.564px;color:#222;">-20.0</span>
<span class="t" style="left:913.46px;top:512.57px;font-size:13.50px;line-height:13.50px;letter-spacing:0.314px;color:#222;">-20.0</span>
<span class="t" style="left:927.33px;top:573.17px;font-size:13.50px;line-height:13.50px;letter-spacing:0.296px;color:#222;">70.0</span>
<span class="t" style="left:1010.33px;top:580.57px;font-size:13.50px;line-height:13.50px;letter-spacing:0.198px;color:#222;">2.5</span>
<span class="t" style="left:723.20px;top:412.29px;font-size:16.20px;line-height:16.20px;letter-spacing:0.972px;color:#111;">M2</span>
<span class="t" style="left:589.19px;top:495.29px;font-size:16.20px;line-height:16.20px;letter-spacing:-0.972px;color:#111;transform:scaleX(0.9956);transform-origin:0 0;">COL</span>
<span class="t" style="left:751.70px;top:540.29px;font-size:16.20px;line-height:16.20px;letter-spacing:0.377px;color:#111;">M3</span>
</div>
</body></html>
